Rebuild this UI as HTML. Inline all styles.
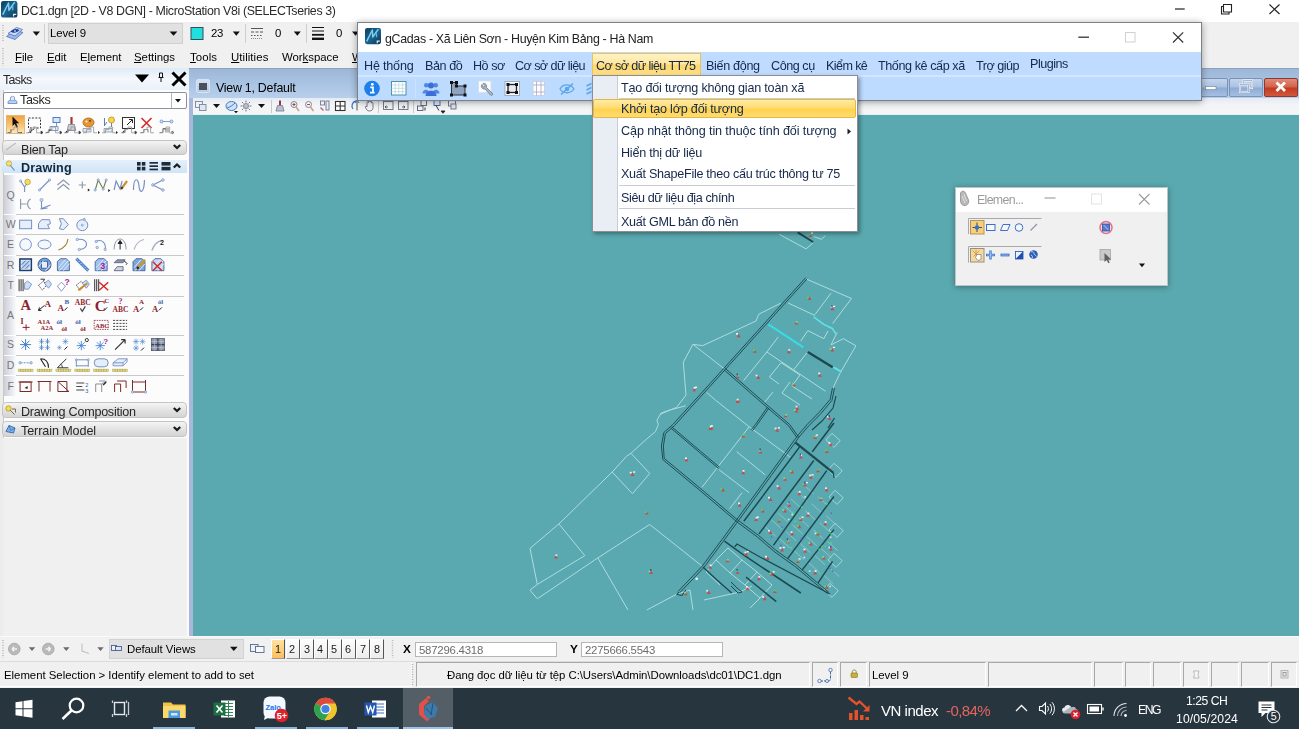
<!DOCTYPE html>
<html><head><meta charset="utf-8"><title>DC1.dgn - MicroStation V8i</title>
<style>
*{box-sizing:border-box;margin:0;padding:0}
html,body{width:1299px;height:729px;overflow:hidden;background:#f0f0f0;font-family:"Liberation Sans",sans-serif;font-size:12px;color:#000}
.a{position:absolute}
.t{position:absolute;white-space:pre;line-height:1;will-change:transform}
svg{position:absolute;overflow:visible}
u{text-decoration:underline;text-underline-offset:1px;text-decoration-thickness:1px}
.cell{position:absolute;top:662px;height:25px;border:1px solid;border-color:#a8a8a8 #fff #fff #a8a8a8;background:#f0f0f0}
.sep{position:absolute;width:1px;background:#c8c8c8}
.bar{position:absolute;left:2px;width:185px;border:1px solid #c4c4c4;border-radius:4px;background:linear-gradient(#f4f4f4,#e2e2e2 55%,#d4d4d4)}
.rowsep{position:absolute;left:16px;width:168px;height:1px;background:#c9c9c9}
.vb{position:absolute;top:639px;width:14px;height:20px;background:linear-gradient(#fdfdfd,#ececec);border-right:1px solid #555;border-bottom:1px solid #999;border-left:1px solid #fff;border-top:1px solid #fff}
</style></head><body>

<!-- main title bar -->
<div class="a" style="left:0;top:0;width:1299px;height:22px;background:#fff"></div>
<!-- chrome toolbar+menu -->
<div class="a" style="left:0;top:22px;width:1299px;height:46px;background:#f0f0f0"></div>
<!-- level dropdown -->
<div class="a" style="left:48px;top:23px;width:135px;height:21px;background:#e1e1e1;border:1px solid #d0d0d0"></div>
<!-- left panel -->
<div class="a" style="left:0;top:68px;width:189px;height:568px;background:#f0f0f0"></div>
<div class="a" style="left:187px;top:90px;width:2px;height:546px;background:#fbfbfb"></div>
<div class="a" style="left:0;top:90px;width:2px;height:546px;background:#fbfbfb"></div>
<!-- view window -->
<div class="a" style="left:189px;top:68px;width:1110px;height:30px;background:linear-gradient(#9db6d5,#a5bfe1 35%,#b7cfea)"></div>
<div class="a" style="left:189px;top:68px;width:1110px;height:1px;background:#8ba2be"></div>
<div class="a" style="left:189px;top:98px;width:4px;height:538px;background:#a9b7da"></div>
<div class="a" style="left:193px;top:97.500px;width:1106px;height:17.500px;background:linear-gradient(#e3ebf5,#f3f4f6 40%,#f5f5f5)"></div>
<div class="a" style="left:193px;top:114px;width:1106px;height:1px;background:#dff3f4"></div>
<div class="a" id="view" style="left:193px;top:115px;width:1106px;height:521px;background:#5aa9b0;overflow:hidden"></div>
<!-- bottom bars -->
<div class="a" style="left:0;top:636px;width:1299px;height:25px;background:#f1f1f1"></div>
<div class="a" style="left:0;top:636px;width:1299px;height:1px;background:#fafafa"></div>
<div class="a" style="left:0;top:661px;width:1299px;height:27px;background:#f0f0f0"></div>
<!-- taskbar -->
<div class="a" style="left:0;top:688px;width:1299px;height:41px;background:#27353e"></div>

<!-- map (inside view, clipped) -->
<div class="a" style="left:193px;top:115px;width:1106px;height:521px;overflow:hidden">
<svg style="left:-193px;top:-115px" width="1299" height="729" viewBox="0 0 1299 729">
<path d="M685.7 405.8L669.9 410.0L661.2 413.0L656.9 420.2L658.3 424.5L655.4 431.7L646.8 438.9L631.0 453.3L626.6 456.2L612.2 472.0L558.9 523.9L530.0 548.4L537.3 584.4L530.0 590.2L537.3 598.8L597.8 557.9L649.7 524.5L701.6 565.7" stroke="#addcdf" stroke-width="1" fill="none" opacity="1"/>
<path d="M631.0 453.3L649.7 473.5L632.4 493.7L612.2 472.0" stroke="#addcdf" stroke-width="1" fill="none" opacity="1"/>
<path d="M558.9 523.9L584.8 555.6L537.3 584.4" stroke="#addcdf" stroke-width="1" fill="none" opacity="1"/>
<path d="M597.8 557.9L628.0 610.0" stroke="#addcdf" stroke-width="1" fill="none" opacity="1"/>
<path d="M646.8 610.0L677.0 594.0L690.0 590.0" stroke="#addcdf" stroke-width="1" fill="none" opacity="1"/>
<path d="M690.0 590.0L693.0 610.0" stroke="#addcdf" stroke-width="1" fill="none" opacity="1"/>
<path d="M704.0 600.0L740.0 592.0L752.0 586.0" stroke="#addcdf" stroke-width="1" fill="none" opacity="1"/>
<path d="M780.7 303.2L758.8 314.2L756.0 321.0L702.5 345.7L692.9 344.3L683.3 362.2L686.0 395.1L676.5 407.4L660.0 414.3" stroke="#addcdf" stroke-width="1" fill="none" opacity="1"/>
<path d="M692.9 344.3L724.5 369.0" stroke="#addcdf" stroke-width="1" fill="none" opacity="1"/>
<path d="M806.0 278.9L851.5 298.5L832.7 323.5" stroke="#addcdf" stroke-width="1" fill="none" opacity="1"/>
<path d="M831.0 293.2L814.9 314.6" stroke="#addcdf" stroke-width="1" fill="none" opacity="1"/>
<path d="M788.2 303.0L814.9 315.5" stroke="#addcdf" stroke-width="1" fill="none" opacity="1"/>
<path d="M837.2 332.4L831.0 344.9L843.4 338.7L855.9 345.8L839.9 373.4L832.7 388.6" stroke="#addcdf" stroke-width="1" fill="none" opacity="1"/>
<path d="M807.8 330.6L823.8 338.7L828.0 331.0" stroke="#addcdf" stroke-width="1" fill="none" opacity="1"/>
<path d="M807.8 330.6L800.6 341.3" stroke="#addcdf" stroke-width="1" fill="none" opacity="1"/>
<path d="M778.3 336.9L766.8 352.0L743.6 380.6" stroke="#addcdf" stroke-width="1" fill="none" opacity="1"/>
<path d="M766.8 352.0L793.5 369.9L825.6 391.3" stroke="#addcdf" stroke-width="1" fill="none" opacity="1"/>
<path d="M793.5 369.9L806.9 352.9" stroke="#addcdf" stroke-width="1" fill="none" opacity="1"/>
<path d="M781.0 362.7L769.4 377.0L779.0 384.0" stroke="#addcdf" stroke-width="1" fill="none" opacity="1"/>
<path d="M781.0 362.7L800.0 375.0" stroke="#addcdf" stroke-width="1" fill="none" opacity="1"/>
<path d="M790.0 382.0L782.0 393.0L800.0 405.0" stroke="#addcdf" stroke-width="1" fill="none" opacity="1"/>
<path d="M800.0 375.0L792.0 386.0L812.0 399.0" stroke="#addcdf" stroke-width="1" fill="none" opacity="1"/>
<path d="M773.0 392.0L764.0 403.0" stroke="#addcdf" stroke-width="1" fill="none" opacity="1"/>
<path d="M779.2 234.3L806.2 248.9L813.1 242.8" stroke="#addcdf" stroke-width="1" fill="none" opacity="1"/>
<path d="M813.8 236.6L821.5 239.3L825.4 235.5" stroke="#addcdf" stroke-width="1" fill="none" opacity="1"/>
<path d="M706.6 392.4L715.3 400.0L749.2 426.8L783.0 451.7L790.0 457.0" stroke="#addcdf" stroke-width="1" fill="none" opacity="1"/>
<path d="M749.2 426.8L701.9 487.4" stroke="#addcdf" stroke-width="1" fill="none" opacity="1"/>
<path d="M736.7 451.7L765.2 474.9" stroke="#addcdf" stroke-width="1" fill="none" opacity="1"/>
<path d="M718.9 469.6L749.2 492.7" stroke="#addcdf" stroke-width="1" fill="none" opacity="1"/>
<path d="M742.0 492.7L729.6 508.8" stroke="#addcdf" stroke-width="1" fill="none" opacity="1"/>
<path d="M716.0 560.0L728.0 548.0L742.0 560.0L730.0 573.0z" stroke="#addcdf" stroke-width="1" fill="none" opacity="1"/>
<path d="M730.0 573.0L745.0 585.0L757.0 572.0L742.0 560.0" stroke="#addcdf" stroke-width="1" fill="none" opacity="1"/>
<path d="M745.0 585.0L760.0 598.0L772.0 585.0L757.0 572.0" stroke="#addcdf" stroke-width="1" fill="none" opacity="1"/>
<path d="M716.0 560.0L706.0 572.0L720.0 585.0" stroke="#addcdf" stroke-width="1" fill="none" opacity="1"/>
<path d="M760.0 598.0L750.0 608.0" stroke="#addcdf" stroke-width="1" fill="none" opacity="1"/>
<path d="M826.0 440.0L832.0 433.3L840.2 440.7L834.1 447.4z" stroke="#addcdf" stroke-width="1" fill="none" opacity="0.85"/>
<path d="M828.0 470.0L834.0 463.3L842.2 470.7L836.1 477.4z" stroke="#addcdf" stroke-width="1" fill="none" opacity="0.85"/>
<path d="M829.0 497.0L835.0 490.3L843.2 497.7L837.1 504.4z" stroke="#addcdf" stroke-width="1" fill="none" opacity="0.85"/>
<path d="M829.0 530.0L835.0 523.3L843.2 530.7L837.1 537.4z" stroke="#addcdf" stroke-width="1" fill="none" opacity="0.85"/>
<path d="M828.0 560.0L834.0 553.3L842.2 560.7L836.1 567.4z" stroke="#addcdf" stroke-width="1" fill="none" opacity="0.85"/>
<path d="M824.0 590.0L830.0 583.3L838.2 590.7L832.1 597.4z" stroke="#addcdf" stroke-width="1" fill="none" opacity="0.85"/>
<path d="M765.4 527.0L775.4 536.0" stroke="#addcdf" stroke-width="1" fill="none" opacity="0.55"/>
<path d="M771.7 519.9L781.7 529.0" stroke="#addcdf" stroke-width="1" fill="none" opacity="0.55"/>
<path d="M778.1 512.9L788.1 522.0" stroke="#addcdf" stroke-width="1" fill="none" opacity="0.55"/>
<path d="M784.5 505.9L794.5 514.9" stroke="#addcdf" stroke-width="1" fill="none" opacity="0.55"/>
<path d="M790.8 498.9L800.8 507.9" stroke="#addcdf" stroke-width="1" fill="none" opacity="0.55"/>
<path d="M797.2 491.8L807.2 500.9" stroke="#addcdf" stroke-width="1" fill="none" opacity="0.55"/>
<path d="M803.6 484.8L813.5 493.8" stroke="#addcdf" stroke-width="1" fill="none" opacity="0.55"/>
<path d="M779.8 538.9L789.8 547.9" stroke="#addcdf" stroke-width="1" fill="none" opacity="0.55"/>
<path d="M786.1 531.8L796.1 540.9" stroke="#addcdf" stroke-width="1" fill="none" opacity="0.55"/>
<path d="M792.5 524.8L802.5 533.9" stroke="#addcdf" stroke-width="1" fill="none" opacity="0.55"/>
<path d="M798.9 517.8L808.9 526.8" stroke="#addcdf" stroke-width="1" fill="none" opacity="0.55"/>
<path d="M805.2 510.8L815.2 519.8" stroke="#addcdf" stroke-width="1" fill="none" opacity="0.55"/>
<path d="M811.6 503.7L821.6 512.8" stroke="#addcdf" stroke-width="1" fill="none" opacity="0.55"/>
<path d="M818.0 496.7L827.9 505.7" stroke="#addcdf" stroke-width="1" fill="none" opacity="0.55"/>
<path d="M794.2 550.8L804.2 559.8" stroke="#addcdf" stroke-width="1" fill="none" opacity="0.55"/>
<path d="M800.5 543.7L810.5 552.8" stroke="#addcdf" stroke-width="1" fill="none" opacity="0.55"/>
<path d="M806.9 536.7L816.9 545.8" stroke="#addcdf" stroke-width="1" fill="none" opacity="0.55"/>
<path d="M813.3 529.7L823.2 538.7" stroke="#addcdf" stroke-width="1" fill="none" opacity="0.55"/>
<path d="M819.6 522.6L829.6 531.7" stroke="#addcdf" stroke-width="1" fill="none" opacity="0.55"/>
<path d="M826.0 515.6L836.0 524.7" stroke="#addcdf" stroke-width="1" fill="none" opacity="0.55"/>
<path d="M808.6 562.7L818.6 571.7" stroke="#addcdf" stroke-width="1" fill="none" opacity="0.55"/>
<path d="M814.9 555.6L824.9 564.7" stroke="#addcdf" stroke-width="1" fill="none" opacity="0.55"/>
<path d="M821.3 548.6L831.3 557.7" stroke="#addcdf" stroke-width="1" fill="none" opacity="0.55"/>
<path d="M827.7 541.6L837.7 550.6" stroke="#addcdf" stroke-width="1" fill="none" opacity="0.55"/>
<path d="M823.0 574.6L833.0 583.6" stroke="#addcdf" stroke-width="1" fill="none" opacity="0.55"/>
<path d="M829.3 567.5L839.3 576.6" stroke="#addcdf" stroke-width="1" fill="none" opacity="0.55"/>
<path d="M768.4 324.3L803.4 347.4" stroke="#38dbe6" stroke-width="2.2" fill="none" opacity="1"/>
<path d="M833.4 367.2L841.5 371.8" stroke="#5fe0e8" stroke-width="2" fill="none" opacity="1"/>
<path d="M813.6 316.9L824.0 324.5L832.3 328.5L836.0 334.0" stroke="#5fe0e8" stroke-width="1.6" fill="none" opacity="1"/>
<path d="M805.7 277.6L723.8 368.4L673.0 424.3L663.8 432.6L661.4 446.0L662.8 459.6L699.4 490.0L736.8 521.7" stroke="#1d4850" stroke-width="0.95" fill="none" opacity="1"/>
<path d="M807.1 278.8L725.2 369.6L674.4 425.7L665.4 433.6L663.4 446.0L664.2 458.4L700.6 488.6L738.0 520.3" stroke="#1d4850" stroke-width="0.95" fill="none" opacity="1"/>
<path d="M670.8 428.0L699.5 452.4L718.3 468.3" stroke="#1d4850" stroke-width="0.95" fill="none" opacity="1"/>
<path d="M671.8 426.8L700.5 451.2L719.3 467.1" stroke="#1d4850" stroke-width="0.95" fill="none" opacity="1"/>
<path d="M723.9 369.7L767.8 408.1L788.4 425.6L797.2 437.9" stroke="#1d4850" stroke-width="0.95" fill="none" opacity="1"/>
<path d="M725.1 368.3L769.0 406.7L789.6 424.4L798.6 436.9" stroke="#1d4850" stroke-width="0.95" fill="none" opacity="1"/>
<path d="M767.7 406.9L755.4 424.5L751.2 429.7" stroke="#1d4850" stroke-width="0.95" fill="none" opacity="1"/>
<path d="M769.1 407.9L756.6 425.5L752.4 430.7" stroke="#1d4850" stroke-width="0.95" fill="none" opacity="1"/>
<path d="M832.5 387.8L830.1 399.5L819.2 412.3L807.3 424.3L798.2 434.9L734.7 522.4L702.1 566.3L678.2 591.3" stroke="#1d4850" stroke-width="0.95" fill="none" opacity="1"/>
<path d="M834.5 388.2L831.9 400.5L820.8 413.7L808.9 425.7L799.8 436.1L736.3 523.6L703.7 567.7L679.8 592.7" stroke="#1d4850" stroke-width="0.95" fill="none" opacity="1"/>
<path d="M836.0 396.0L833.0 408.0L822.0 421.0L812.0 430.0" stroke="#1d4850" stroke-width="1.1" fill="none" opacity="1"/>
<path d="M834.5 418.0L828.0 428.0" stroke="#1d4850" stroke-width="1.3" fill="none" opacity="1"/>
<path d="M679.0 592.0L677.0 594.5L682.0 595.5L686.0 590.0" stroke="#1d4850" stroke-width="1.1" fill="none" opacity="1"/>
<path d="M736.8 521.8L757.0 536.7L774.3 551.6L794.4 566.0L827.6 593.7" stroke="#1d4850" stroke-width="0.95" fill="none" opacity="1"/>
<path d="M738.0 520.2L758.2 535.1L775.5 550.0L795.6 564.4L828.8 592.3" stroke="#1d4850" stroke-width="0.95" fill="none" opacity="1"/>
<path d="M759.0 533.9L813.8 460.5" stroke="#1d4850" stroke-width="1.5" fill="none" opacity="1"/>
<path d="M773.4 545.4L826.7 470.6" stroke="#1d4850" stroke-width="1.5" fill="none" opacity="1"/>
<path d="M787.8 558.4L833.9 496.5" stroke="#1d4850" stroke-width="1.5" fill="none" opacity="1"/>
<path d="M802.2 569.9L833.9 529.6" stroke="#1d4850" stroke-width="1.5" fill="none" opacity="1"/>
<path d="M818.1 582.9L832.5 561.3" stroke="#1d4850" stroke-width="1.5" fill="none" opacity="1"/>
<path d="M812.3 451.8L833.9 423.0" stroke="#1d4850" stroke-width="1.5" fill="none" opacity="1"/>
<path d="M743.8 521.3L800.0 446.4" stroke="#1d4850" stroke-width="1.5" fill="none" opacity="1"/>
<path d="M795.5 442.6L833.4 472.8" stroke="#1d4850" stroke-width="2.2" fill="none" opacity="1"/>
<path d="M833.4 472.8L834.0 478.0" stroke="#1d4850" stroke-width="1.2" fill="none" opacity="1"/>
<path d="M807.8 352.0L832.7 367.2" stroke="#1d4850" stroke-width="2.4" fill="none" opacity="1"/>
<path d="M797.7 232.4L813.1 242.0" stroke="#1d4850" stroke-width="2" fill="none" opacity="1"/>
<path d="M724.5 541.1L745.0 556.0L800.8 593.0" stroke="#1d4850" stroke-width="1.5" fill="none" opacity="1"/>
<path d="M734.6 546.9L737.0 544.0L760.0 557.0L830.0 594.0" stroke="#1d4850" stroke-width="1.3" fill="none" opacity="1"/>
<path d="M746.1 577.1L776.3 601.6" stroke="#1d4850" stroke-width="1.4" fill="none" opacity="1"/>
<path d="M702.9 567.0L717.0 580.0L731.7 593.0" stroke="#1d4850" stroke-width="1.3" fill="none" opacity="1"/>
<path d="M731.0 582.0L737.0 588.0L742.0 592.0L738.0 593.0L731.0 586.0" stroke="#1d4850" stroke-width="1" fill="none" opacity="1"/>
<path d="M630.5 476.0l1.900-3.500 1.900 3.500z" fill="#cf4340" opacity=".92"/>
<rect x="629.8" y="471.8" width="1.900" height="1.700" fill="#f4f4f4"/>
<rect x="633.0" y="471.4" width="2.200" height="1.300" fill="#f6f6f6"/>
<path d="M644.9 514.6l1.900-3.500 1.900 3.500z" fill="#cf4340" opacity=".92"/>
<rect x="645.2" y="511.2" width="1.900" height="1.700" fill="#52d85a"/>
<path d="M554.1 558.6l1.900-3.500 1.900 3.500z" fill="#cf4340" opacity=".92"/>
<rect x="555.4" y="554.4" width="1.900" height="1.700" fill="#e9e9ff"/>
<path d="M649.2 573.9l1.900-3.500 1.900 3.500z" fill="#cf4340" opacity=".92"/>
<rect x="648.5" y="570.5" width="1.900" height="1.700" fill="#7ce07a"/>
<rect x="650.1" y="569.0" width="1.300" height="1.900" fill="#3b3fae"/>
<path d="M684.7 461.6l1.900-3.500 1.900 3.500z" fill="#cf4340" opacity=".92"/>
<rect x="685.0" y="457.4" width="1.900" height="1.700" fill="#f4f4f4"/>
<path d="M708.3 429.8l1.900-3.500 1.900 3.500z" fill="#cf4340" opacity=".92"/>
<rect x="709.6" y="426.4" width="1.900" height="1.700" fill="#52d85a"/>
<rect x="710.8" y="425.2" width="2.200" height="1.300" fill="#f6f6f6"/>
<path d="M706.9 594.1l1.900-3.500 1.900 3.500z" fill="#cf4340" opacity=".92"/>
<rect x="706.2" y="589.9" width="1.900" height="1.700" fill="#e9e9ff"/>
<path d="M683.8 595.3l1.900-3.500 1.900 3.500z" fill="#cf4340" opacity=".92"/>
<rect x="684.1" y="591.9" width="1.900" height="1.700" fill="#7ce07a"/>
<path d="M708.3 568.7l1.900-3.500 1.900 3.500z" fill="#cf4340" opacity=".92"/>
<rect x="709.6" y="564.5" width="1.900" height="1.700" fill="#f4f4f4"/>
<path d="M807.6 300.1l1.900-3.500 1.900 3.500z" fill="#cf4340" opacity=".92"/>
<rect x="806.9" y="296.7" width="1.900" height="1.700" fill="#52d85a"/>
<path d="M830.4 310.3l1.900-3.500 1.900 3.500z" fill="#cf4340" opacity=".92"/>
<rect x="830.7" y="306.1" width="1.900" height="1.700" fill="#e9e9ff"/>
<rect x="832.9" y="305.7" width="2.200" height="1.300" fill="#f6f6f6"/>
<rect x="831.3" y="305.4" width="1.300" height="1.900" fill="#3b3fae"/>
<path d="M794.5 324.5l1.900-3.500 1.900 3.500z" fill="#cf4340" opacity=".92"/>
<rect x="795.8" y="321.1" width="1.900" height="1.700" fill="#7ce07a"/>
<path d="M736.8 337.2l1.900-3.500 1.900 3.500z" fill="#cf4340" opacity=".92"/>
<rect x="736.1" y="333.0" width="1.900" height="1.700" fill="#f4f4f4"/>
<path d="M752.8 352.8l1.900-3.500 1.900 3.500z" fill="#cf4340" opacity=".92"/>
<rect x="753.1" y="349.4" width="1.900" height="1.700" fill="#52d85a"/>
<path d="M787.0 353.3l1.900-3.500 1.900 3.500z" fill="#cf4340" opacity=".92"/>
<rect x="788.3" y="349.1" width="1.900" height="1.700" fill="#e9e9ff"/>
<path d="M830.4 351.4l1.900-3.500 1.900 3.500z" fill="#cf4340" opacity=".92"/>
<rect x="829.7" y="348.0" width="1.900" height="1.700" fill="#7ce07a"/>
<rect x="832.9" y="346.8" width="2.200" height="1.300" fill="#f6f6f6"/>
<path d="M818.0 376.7l1.900-3.500 1.900 3.500z" fill="#cf4340" opacity=".92"/>
<rect x="818.3" y="372.5" width="1.900" height="1.700" fill="#f4f4f4"/>
<path d="M735.7 378.3l1.900-3.500 1.900 3.500z" fill="#cf4340" opacity=".92"/>
<rect x="737.0" y="374.9" width="1.900" height="1.700" fill="#52d85a"/>
<rect x="736.6" y="373.4" width="1.300" height="1.900" fill="#3b3fae"/>
<path d="M756.3 378.9l1.900-3.500 1.900 3.500z" fill="#cf4340" opacity=".92"/>
<rect x="755.6" y="374.7" width="1.900" height="1.700" fill="#e9e9ff"/>
<path d="M792.0 386.3l1.900-3.500 1.900 3.500z" fill="#cf4340" opacity=".92"/>
<rect x="792.3" y="382.9" width="1.900" height="1.700" fill="#7ce07a"/>
<path d="M692.4 391.2l1.900-3.500 1.900 3.500z" fill="#cf4340" opacity=".92"/>
<rect x="693.7" y="387.0" width="1.900" height="1.700" fill="#f4f4f4"/>
<rect x="694.9" y="386.6" width="2.200" height="1.300" fill="#f6f6f6"/>
<path d="M736.3 402.2l1.900-3.500 1.900 3.500z" fill="#cf4340" opacity=".92"/>
<rect x="735.6" y="398.8" width="1.900" height="1.700" fill="#52d85a"/>
<path d="M795.3 409.9l1.900-3.500 1.900 3.500z" fill="#cf4340" opacity=".92"/>
<rect x="795.6" y="405.7" width="1.900" height="1.700" fill="#e9e9ff"/>
<path d="M783.8 417.3l1.900-3.500 1.900 3.500z" fill="#cf4340" opacity=".92"/>
<rect x="785.1" y="413.9" width="1.900" height="1.700" fill="#7ce07a"/>
<path d="M827.6 420.0l1.900-3.500 1.900 3.500z" fill="#cf4340" opacity=".92"/>
<rect x="826.9" y="415.8" width="1.900" height="1.700" fill="#f4f4f4"/>
<rect x="828.5" y="415.1" width="1.300" height="1.900" fill="#3b3fae"/>
<path d="M808.4 237.0l1.900-3.500 1.900 3.500z" fill="#cf4340" opacity=".92"/>
<rect x="808.7" y="233.6" width="1.900" height="1.700" fill="#52d85a"/>
<rect x="810.9" y="232.4" width="2.200" height="1.300" fill="#f6f6f6"/>
<path d="M735.5 403.0l1.900-3.500 1.900 3.500z" fill="#cf4340" opacity=".92"/>
<rect x="736.8" y="398.8" width="1.900" height="1.700" fill="#e9e9ff"/>
<path d="M794.6 412.5l1.900-3.500 1.900 3.500z" fill="#cf4340" opacity=".92"/>
<rect x="793.9" y="409.1" width="1.900" height="1.700" fill="#7ce07a"/>
<path d="M709.6 429.8l1.900-3.500 1.900 3.500z" fill="#cf4340" opacity=".92"/>
<rect x="709.9" y="425.6" width="1.900" height="1.700" fill="#f4f4f4"/>
<path d="M741.3 437.6l1.900-3.500 1.900 3.500z" fill="#cf4340" opacity=".92"/>
<rect x="742.6" y="434.2" width="1.900" height="1.700" fill="#52d85a"/>
<path d="M775.3 431.8l1.900-3.500 1.900 3.500z" fill="#cf4340" opacity=".92"/>
<rect x="774.6" y="427.6" width="1.900" height="1.700" fill="#e9e9ff"/>
<rect x="777.8" y="427.2" width="2.200" height="1.300" fill="#f6f6f6"/>
<path d="M758.6 453.4l1.900-3.500 1.900 3.500z" fill="#cf4340" opacity=".92"/>
<rect x="758.9" y="450.0" width="1.900" height="1.700" fill="#7ce07a"/>
<rect x="759.5" y="448.5" width="1.300" height="1.900" fill="#3b3fae"/>
<path d="M741.3 474.2l1.900-3.500 1.900 3.500z" fill="#cf4340" opacity=".92"/>
<rect x="742.6" y="470.0" width="1.900" height="1.700" fill="#f4f4f4"/>
<path d="M721.1 491.5l1.900-3.500 1.900 3.500z" fill="#cf4340" opacity=".92"/>
<rect x="720.4" y="488.1" width="1.900" height="1.700" fill="#52d85a"/>
<path d="M737.8 506.7l1.900-3.500 1.900 3.500z" fill="#cf4340" opacity=".92"/>
<rect x="738.1" y="502.5" width="1.900" height="1.700" fill="#e9e9ff"/>
<path d="M813.3 439.0l1.900-3.500 1.900 3.500z" fill="#cf4340" opacity=".92"/>
<rect x="814.6" y="435.6" width="1.900" height="1.700" fill="#7ce07a"/>
<rect x="815.8" y="434.4" width="2.200" height="1.300" fill="#f6f6f6"/>
<path d="M829.1 446.2l1.900-3.500 1.900 3.500z" fill="#cf4340" opacity=".92"/>
<rect x="828.4" y="442.0" width="1.900" height="1.700" fill="#f4f4f4"/>
<path d="M824.8 452.9l1.900-3.500 1.900 3.500z" fill="#cf4340" opacity=".92"/>
<rect x="825.1" y="449.5" width="1.900" height="1.700" fill="#52d85a"/>
<path d="M798.9 458.6l1.900-3.500 1.900 3.500z" fill="#cf4340" opacity=".92"/>
<rect x="800.2" y="454.4" width="1.900" height="1.700" fill="#e9e9ff"/>
<rect x="799.8" y="453.7" width="1.300" height="1.900" fill="#3b3fae"/>
<path d="M790.3 473.6l1.900-3.500 1.900 3.500z" fill="#cf4340" opacity=".92"/>
<rect x="789.6" y="470.2" width="1.900" height="1.700" fill="#7ce07a"/>
<path d="M809.0 478.8l1.900-3.500 1.900 3.500z" fill="#cf4340" opacity=".92"/>
<rect x="809.3" y="474.6" width="1.900" height="1.700" fill="#f4f4f4"/>
<rect x="811.5" y="474.2" width="2.200" height="1.300" fill="#f6f6f6"/>
<path d="M816.2 472.2l1.900-3.500 1.900 3.500z" fill="#cf4340" opacity=".92"/>
<rect x="817.5" y="468.8" width="1.900" height="1.700" fill="#52d85a"/>
<path d="M777.3 489.4l1.900-3.500 1.900 3.500z" fill="#cf4340" opacity=".92"/>
<rect x="776.6" y="485.2" width="1.900" height="1.700" fill="#e9e9ff"/>
<path d="M783.1 480.8l1.900-3.500 1.900 3.500z" fill="#cf4340" opacity=".92"/>
<rect x="783.4" y="477.4" width="1.900" height="1.700" fill="#7ce07a"/>
<path d="M797.5 495.2l1.900-3.500 1.900 3.500z" fill="#cf4340" opacity=".92"/>
<rect x="798.8" y="491.0" width="1.900" height="1.700" fill="#f4f4f4"/>
<path d="M803.2 486.6l1.900-3.500 1.900 3.500z" fill="#cf4340" opacity=".92"/>
<rect x="802.5" y="483.2" width="1.900" height="1.700" fill="#52d85a"/>
<rect x="805.7" y="482.0" width="2.200" height="1.300" fill="#f6f6f6"/>
<rect x="804.1" y="481.7" width="1.300" height="1.900" fill="#3b3fae"/>
<path d="M824.8 491.5l1.900-3.500 1.900 3.500z" fill="#cf4340" opacity=".92"/>
<rect x="825.1" y="487.3" width="1.900" height="1.700" fill="#e9e9ff"/>
<path d="M819.1 501.0l1.900-3.500 1.900 3.500z" fill="#cf4340" opacity=".92"/>
<rect x="820.4" y="497.6" width="1.900" height="1.700" fill="#7ce07a"/>
<path d="M768.7 501.0l1.900-3.500 1.900 3.500z" fill="#cf4340" opacity=".92"/>
<rect x="768.0" y="496.8" width="1.900" height="1.700" fill="#f4f4f4"/>
<path d="M760.9 512.5l1.900-3.500 1.900 3.500z" fill="#cf4340" opacity=".92"/>
<rect x="761.2" y="509.1" width="1.900" height="1.700" fill="#52d85a"/>
<path d="M754.3 521.1l1.900-3.500 1.900 3.500z" fill="#cf4340" opacity=".92"/>
<rect x="755.6" y="516.9" width="1.900" height="1.700" fill="#e9e9ff"/>
<rect x="756.8" y="516.5" width="2.200" height="1.300" fill="#f6f6f6"/>
<path d="M783.1 512.5l1.900-3.500 1.900 3.500z" fill="#cf4340" opacity=".92"/>
<rect x="782.4" y="509.1" width="1.900" height="1.700" fill="#7ce07a"/>
<path d="M787.4 506.7l1.900-3.500 1.900 3.500z" fill="#cf4340" opacity=".92"/>
<rect x="787.7" y="502.5" width="1.900" height="1.700" fill="#f4f4f4"/>
<rect x="788.3" y="501.8" width="1.300" height="1.900" fill="#3b3fae"/>
<path d="M777.3 522.6l1.900-3.500 1.900 3.500z" fill="#cf4340" opacity=".92"/>
<rect x="778.6" y="519.2" width="1.900" height="1.700" fill="#52d85a"/>
<path d="M768.7 534.1l1.900-3.500 1.900 3.500z" fill="#cf4340" opacity=".92"/>
<rect x="768.0" y="529.9" width="1.900" height="1.700" fill="#e9e9ff"/>
<path d="M798.9 521.1l1.900-3.500 1.900 3.500z" fill="#cf4340" opacity=".92"/>
<rect x="799.2" y="517.7" width="1.900" height="1.700" fill="#7ce07a"/>
<rect x="801.4" y="516.5" width="2.200" height="1.300" fill="#f6f6f6"/>
<path d="M806.1 516.8l1.900-3.500 1.900 3.500z" fill="#cf4340" opacity=".92"/>
<rect x="807.4" y="512.6" width="1.900" height="1.700" fill="#f4f4f4"/>
<path d="M797.5 528.3l1.900-3.500 1.900 3.500z" fill="#cf4340" opacity=".92"/>
<rect x="796.8" y="524.9" width="1.900" height="1.700" fill="#52d85a"/>
<path d="M790.3 535.5l1.900-3.500 1.900 3.500z" fill="#cf4340" opacity=".92"/>
<rect x="790.6" y="531.3" width="1.900" height="1.700" fill="#e9e9ff"/>
<path d="M785.9 543.3l1.900-3.500 1.900 3.500z" fill="#cf4340" opacity=".92"/>
<rect x="787.2" y="539.9" width="1.900" height="1.700" fill="#7ce07a"/>
<rect x="786.8" y="538.4" width="1.300" height="1.900" fill="#3b3fae"/>
<path d="M780.2 551.4l1.900-3.500 1.900 3.500z" fill="#cf4340" opacity=".92"/>
<rect x="779.5" y="547.2" width="1.900" height="1.700" fill="#f4f4f4"/>
<rect x="782.7" y="546.8" width="2.200" height="1.300" fill="#f6f6f6"/>
<path d="M816.2 535.5l1.900-3.500 1.900 3.500z" fill="#cf4340" opacity=".92"/>
<rect x="816.5" y="532.1" width="1.900" height="1.700" fill="#52d85a"/>
<path d="M823.4 525.4l1.900-3.500 1.900 3.500z" fill="#cf4340" opacity=".92"/>
<rect x="824.7" y="521.2" width="1.900" height="1.700" fill="#e9e9ff"/>
<path d="M809.0 545.6l1.900-3.500 1.900 3.500z" fill="#cf4340" opacity=".92"/>
<rect x="808.3" y="542.2" width="1.900" height="1.700" fill="#7ce07a"/>
<path d="M803.2 552.8l1.900-3.500 1.900 3.500z" fill="#cf4340" opacity=".92"/>
<rect x="803.5" y="548.6" width="1.900" height="1.700" fill="#f4f4f4"/>
<path d="M796.0 562.9l1.900-3.500 1.900 3.500z" fill="#cf4340" opacity=".92"/>
<rect x="797.3" y="559.5" width="1.900" height="1.700" fill="#52d85a"/>
<rect x="798.5" y="558.3" width="2.200" height="1.300" fill="#f6f6f6"/>
<path d="M829.1 550.8l1.900-3.500 1.900 3.500z" fill="#cf4340" opacity=".92"/>
<rect x="828.4" y="546.6" width="1.900" height="1.700" fill="#e9e9ff"/>
<rect x="830.0" y="545.9" width="1.300" height="1.900" fill="#3b3fae"/>
<path d="M821.9 559.4l1.900-3.500 1.900 3.500z" fill="#cf4340" opacity=".92"/>
<rect x="822.2" y="556.0" width="1.900" height="1.700" fill="#7ce07a"/>
<path d="M813.3 574.4l1.900-3.500 1.900 3.500z" fill="#cf4340" opacity=".92"/>
<rect x="814.6" y="570.2" width="1.900" height="1.700" fill="#f4f4f4"/>
<path d="M824.8 588.8l1.900-3.500 1.900 3.500z" fill="#cf4340" opacity=".92"/>
<rect x="824.1" y="585.4" width="1.900" height="1.700" fill="#52d85a"/>
<path d="M744.2 555.7l1.900-3.500 1.900 3.500z" fill="#cf4340" opacity=".92"/>
<rect x="744.5" y="551.5" width="1.900" height="1.700" fill="#e9e9ff"/>
<rect x="746.7" y="551.1" width="2.200" height="1.300" fill="#f6f6f6"/>
<path d="M725.5 562.3l1.900-3.500 1.900 3.500z" fill="#cf4340" opacity=".92"/>
<rect x="726.8" y="558.9" width="1.900" height="1.700" fill="#7ce07a"/>
<path d="M765.8 560.0l1.900-3.500 1.900 3.500z" fill="#cf4340" opacity=".92"/>
<rect x="765.1" y="555.8" width="1.900" height="1.700" fill="#f4f4f4"/>
<path d="M735.5 573.8l1.900-3.500 1.900 3.500z" fill="#cf4340" opacity=".92"/>
<rect x="735.8" y="570.4" width="1.900" height="1.700" fill="#52d85a"/>
<rect x="736.4" y="568.9" width="1.300" height="1.900" fill="#3b3fae"/>
<path d="M757.1 580.2l1.900-3.500 1.900 3.500z" fill="#cf4340" opacity=".92"/>
<rect x="758.4" y="576.0" width="1.900" height="1.700" fill="#e9e9ff"/>
<path d="M770.1 575.8l1.900-3.500 1.900 3.500z" fill="#cf4340" opacity=".92"/>
<rect x="769.4" y="572.4" width="1.900" height="1.700" fill="#7ce07a"/>
<rect x="772.6" y="571.2" width="2.200" height="1.300" fill="#f6f6f6"/>
<path d="M745.6 590.2l1.900-3.500 1.900 3.500z" fill="#cf4340" opacity=".92"/>
<rect x="745.9" y="586.0" width="1.900" height="1.700" fill="#f4f4f4"/>
<path d="M773.0 593.1l1.900-3.500 1.900 3.500z" fill="#cf4340" opacity=".92"/>
<rect x="774.3" y="589.7" width="1.900" height="1.700" fill="#52d85a"/>
<path d="M762.9 600.3l1.900-3.500 1.900 3.500z" fill="#cf4340" opacity=".92"/>
<rect x="762.2" y="596.1" width="1.900" height="1.700" fill="#e9e9ff"/>
<rect x="790.4" y="547.1" width="1.600" height="1.600" fill="#58e060" opacity=".85"/>
<rect x="791.4" y="513.8" width="1.600" height="1.600" fill="#e8f6f6" opacity=".85"/>
<rect x="780.2" y="544.4" width="1.600" height="1.600" fill="#6a5fd0" opacity=".85"/>
<rect x="770.8" y="536.2" width="1.600" height="1.600" fill="#6a5fd0" opacity=".85"/>
<rect x="791.8" y="511.6" width="1.600" height="1.600" fill="#58e060" opacity=".85"/>
<rect x="830.5" y="542.0" width="1.600" height="1.600" fill="#58e060" opacity=".85"/>
<rect x="818.4" y="548.5" width="1.600" height="1.600" fill="#58e060" opacity=".85"/>
<rect x="804.4" y="496.1" width="1.600" height="1.600" fill="#e8f6f6" opacity=".85"/>
<rect x="814.5" y="532.6" width="1.600" height="1.600" fill="#e8f6f6" opacity=".85"/>
<rect x="830.4" y="533.1" width="1.600" height="1.600" fill="#58e060" opacity=".85"/>
<rect x="829.8" y="536.5" width="1.600" height="1.600" fill="#e8f6f6" opacity=".85"/>
<rect x="801.1" y="506.3" width="1.600" height="1.600" fill="#58e060" opacity=".85"/>
<rect x="825.8" y="545.8" width="1.600" height="1.600" fill="#6a5fd0" opacity=".85"/>
<rect x="786.7" y="541.5" width="1.600" height="1.600" fill="#58e060" opacity=".85"/>
<rect x="781.2" y="526.3" width="1.600" height="1.600" fill="#6a5fd0" opacity=".85"/>
<rect x="826.0" y="503.1" width="1.600" height="1.600" fill="#58e060" opacity=".85"/>
<rect x="803.5" y="556.7" width="1.600" height="1.600" fill="#e8f6f6" opacity=".85"/>
<rect x="794.5" y="520.6" width="1.600" height="1.600" fill="#58e060" opacity=".85"/>
<rect x="829.3" y="585.7" width="1.600" height="1.600" fill="#e8f6f6" opacity=".85"/>
<rect x="800.6" y="537.9" width="1.600" height="1.600" fill="#6a5fd0" opacity=".85"/>
<rect x="821.3" y="545.7" width="1.600" height="1.600" fill="#58e060" opacity=".85"/>
<rect x="808.8" y="570.3" width="1.600" height="1.600" fill="#e8f6f6" opacity=".85"/>
<rect x="829.5" y="567.6" width="1.600" height="1.600" fill="#6a5fd0" opacity=".85"/>
<rect x="825.1" y="545.5" width="1.600" height="1.600" fill="#58e060" opacity=".85"/>
<rect x="818.8" y="572.5" width="1.600" height="1.600" fill="#58e060" opacity=".85"/>
<rect x="830.4" y="512.4" width="1.600" height="1.600" fill="#6a5fd0" opacity=".85"/>
<rect x="787.9" y="518.7" width="1.600" height="1.600" fill="#e8f6f6" opacity=".85"/>
<rect x="832.0" y="570.2" width="1.600" height="1.600" fill="#6a5fd0" opacity=".85"/>
<circle cx="696.700" cy="578.700" r="1.300" fill="#e8ffff"/>
</svg>
</div>

<!-- main app icon -->
<svg style="left:1.400px;top:1.100px" width="16.400" height="16.600" viewBox="0 0 16.400 16.600">
<defs><linearGradient id="gi1" x1="0" y1="0" x2="1" y2="1"><stop offset="0" stop-color="#0d3f5f"/><stop offset=".5" stop-color="#1b6591"/><stop offset="1" stop-color="#0c3350"/></linearGradient></defs>
 <rect x="0" y="0" width="16.400" height="16.600" rx="2.200" fill="url(#gi1)"/>
 <path d="M1.700 13.700L7.500 2l.4 7.200L13.700 1.100" stroke="#86d3f6" stroke-width="1.500" fill="none" stroke-linejoin="round" opacity=".95"/>
 <path d="M11.600 5.100l.3 4.300" stroke="#5fb6e6" stroke-width="1.300"/>
 <path d="M12.600 15.600v-2.200h2.600" stroke="#d9ecf7" stroke-width="1.300" fill="none"/>
</svg>
<!-- main window buttons -->
<svg style="left:1160px;top:0" width="139" height="22" viewBox="1160 0 139 22">
 <path d="M1175 9h9.700" stroke="#222" stroke-width="1.200"/>
 <path d="M1223.500 6.500h-2v7.500h7.500v-2M1223.500 4.500h8v7.500h-8z" stroke="#222" stroke-width="1.100" fill="none"/>
 <path d="M1269.500 4.500l10 9.500M1279.500 4.500l-10 9.500" stroke="#222" stroke-width="1.200"/>
</svg>
<!-- top toolbar -->
<svg style="left:0;top:22px" width="360" height="24" viewBox="0 22 360 24">
 <path d="M3 25v17" stroke="#b8b8b8" stroke-width="1.500" stroke-dasharray="1 1.500"/>
 <path d="M6.500 36.500l9-6.500 7.500 2.500-8 7z" fill="#9db9ea" stroke="#4a6fc0" stroke-width=".8"/>
 <path d="M8 33.500l8.500-6 6 2-7.500 6.500z" fill="#c9dbf6" stroke="#4a6fc0" stroke-width=".8"/>
 <path d="M10.500 31.800c2.500-3 6.500-3.600 9-1.500-2.500 2.600-6 3.300-9 1.500z" fill="#24408c"/>
 <circle cx="15" cy="31" r="1.100" fill="#9db9ea"/>
 <path d="M32.700 31.500h7.300l-3.650 4.200z" fill="#111"/>
 <path d="M44.500 24v19" stroke="#cfcfcf" stroke-width="1"/>
 <path d="M169.600 31.500h7.800l-3.900 4.200z" fill="#111"/>
 <rect x="191" y="27.500" width="12" height="12" fill="#1fe0df" stroke="#3a4a55" stroke-width="1"/>
 <path d="M232.800 31.500h7l-3.500 4.200z" fill="#111"/>
 <path d="M245.500 24v19" stroke="#cfcfcf" stroke-width="1"/>
 <path d="M251 28.500h12" stroke="#555" stroke-width="1"/>
 <path d="M251 32h12" stroke="#555" stroke-width="1" stroke-dasharray="3 1.500"/>
 <path d="M251 35.500h12" stroke="#555" stroke-width="1" stroke-dasharray="1.500 1.500"/>
 <path d="M251 38.500h12" stroke="#888" stroke-width="1" stroke-dasharray="1 1"/>
 <path d="M293.800 31.500h7l-3.500 4.200z" fill="#111"/>
 <path d="M306.500 24v19" stroke="#cfcfcf" stroke-width="1"/>
 <path d="M312 27.500h12M312 31h12" stroke="#111" stroke-width="1.200"/>
 <path d="M312 34.800h12" stroke="#111" stroke-width="1.800"/>
 <path d="M312 38.800h12" stroke="#111" stroke-width="2.400"/>
 <path d="M352 31.500h7l-3.500 4.200z" fill="#111"/>
</svg>
<span class="t" style="left:352px;top:52.400px;font-size:11.400px"><u>W</u>indow</span>
<svg style="left:2px;top:48px" width="3" height="18" viewBox="0 0 3 18"><path d="M1 0v18" stroke="#b8b8b8" stroke-width="1.500" stroke-dasharray="1 1.500"/></svg>
<!-- view title icon -->
<div class="a" style="left:196px;top:79px;width:14px;height:14px;border:1px solid #d7e3f2;border-radius:2px;background:linear-gradient(#d3e0f0,#b7cbe6)"></div>
<div class="a" style="left:199px;top:82.500px;width:7.500px;height:7.500px;background:#4a4f5c"></div>
<!-- view buttons -->
<div class="a" style="left:1199px;top:77.500px;width:28.500px;height:19px;border:1px solid #7b92b5;border-radius:2px;background:linear-gradient(#c3d5ec,#a9c1e2 48%,#8eabd4 52%,#a5bfe1)"></div>
<div class="a" style="left:1229px;top:77.500px;width:33.500px;height:19px;border:1px solid #7b92b5;border-radius:2px;background:linear-gradient(#c3d5ec,#a9c1e2 48%,#8eabd4 52%,#a5bfe1)"></div>
<div class="a" style="left:1264px;top:77.500px;width:33.500px;height:19px;border:1px solid #8a3b30;border-radius:2px;background:linear-gradient(#e08a76,#d2614a 48%,#c2391f 52%,#d2573d)"></div>
<svg style="left:1199px;top:77px" width="100" height="20" viewBox="1199 77 100 20">
 <rect x="1205.500" y="86.500" width="10.500" height="3.200" fill="#fff" stroke="#6c7f9d" stroke-width=".6"/>
 <path d="M1243.500 83.500v-3h8.500v7.500h-3" fill="none" stroke="#fff" stroke-width="1.800"/>
 <rect x="1240" y="84.500" width="8.500" height="7.500" fill="none" stroke="#fff" stroke-width="1.800"/>
 <path d="M1243.500 83.500v-3h8.500v7.500h-3M1240 84.500h8.500v7.500h-8.500z" fill="none" stroke="#5b6f90" stroke-width=".5"/>
 <path d="M1276.500 82.500l8.500 8.500M1285 82.500l-8.500 8.500" stroke="#fff" stroke-width="2.800"/>
</svg>
<!-- view toolbar icons -->
<svg style="left:193px;top:98px" width="270" height="17" viewBox="193 98 270 17">
 <rect x="195.500" y="101.500" width="7" height="6" fill="#eef2f8" stroke="#7a8598" stroke-width=".9"/><rect x="199.500" y="104.500" width="6.500" height="6" fill="#dfe6f2" stroke="#7a8598" stroke-width=".9"/>
 <path d="M213 104h7l-3.500 4z" fill="#111"/>
 <ellipse cx="231.500" cy="106" rx="5.500" ry="4.500" fill="#cfe3f8" stroke="#3f78c4" stroke-width="1"/><path d="M227 108c3-1 6-3 8-5" stroke="#3f78c4" stroke-width="1" fill="none"/><path d="M234 111h4l-2 2.300z" fill="#111"/>
 <circle cx="246" cy="106" r="2.600" fill="#b8bcc6" stroke="#70778a" stroke-width=".7"/><path d="M246 100.500v2M246 109.500v2M240.500 106h2M249.500 106h2M242 102l1.400 1.400M248.600 108.600L250 110M242 110l1.400-1.400M248.600 103.400L250 102" stroke="#70778a" stroke-width="1"/>
 <path d="M258 104h7l-3.500 4z" fill="#111"/>
 <path d="M271.500 100v13" stroke="#c9c9c9" stroke-width="1"/>
 <path d="M280 100.500v5" stroke="#a0323c" stroke-width="2"/><path d="M277.500 105.500h5l1.500 5.500h-8z" fill="#b9c0d2" stroke="#6f7892" stroke-width=".8"/>
 <circle cx="294" cy="104.500" r="3" fill="#f1f1f4" stroke="#8d8592" stroke-width="1"/><path d="M296 107l3 4" stroke="#c79a86" stroke-width="1.400"/><path d="M292.500 104.500h3M294 103v3" stroke="#7a2a35" stroke-width=".8"/>
 <circle cx="308.500" cy="104.500" r="3" fill="#f1f1f4" stroke="#8d8592" stroke-width="1"/><path d="M310.500 107l3 4" stroke="#c79a86" stroke-width="1.400"/><path d="M307 104.500h3" stroke="#7a2a35" stroke-width=".8"/>
 <rect x="320.500" y="101" width="4" height="4" fill="none" stroke="#6f7892" stroke-width=".9"/><rect x="326" y="101" width="3" height="9" fill="#e8ecf3" stroke="#6f7892" stroke-width=".9"/><path d="M320.500 107.500l3 3" stroke="#b0606a" stroke-width="1.200"/>
 <rect x="335.500" y="101.500" width="9.500" height="9" fill="#fff" stroke="#333" stroke-width="1.100"/><path d="M335.500 106h9.500M340.200 101.500v9" stroke="#333" stroke-width="1.100"/>
 <path d="M353 109c-2-3-1-7 3-8" stroke="#3f78c4" stroke-width="1.300" fill="none"/><path d="M357 100.500v10" stroke="#555" stroke-width="1"/><path d="M355 103l2-3 2 3" stroke="#3f78c4" stroke-width="1" fill="none"/>
 <path d="M367 106v-3.500c0-1.200 1.500-1.200 1.500 0v-1c0-1.200 1.500-1.200 1.500 0v.6c0-1.200 1.500-1.200 1.500 0v1c0-1 1.500-1 1.500.2v4c0 2-1 3.700-3.500 3.700s-3-1.600-4-3.500c-.6-1.200.6-1.800 1.500-.5z" fill="#f4f4f8" stroke="#555c70" stroke-width=".8"/>
 <path d="M378.500 100v13" stroke="#c9c9c9" stroke-width="1"/>
 <rect x="383.500" y="101.500" width="9.500" height="8" fill="#f1f3f7" stroke="#666e80" stroke-width=".9"/><path d="M388 107h-3m0 0l1.500-1.300m-1.500 1.300l1.500 1.300" stroke="#444" stroke-width=".8" fill="none"/>
 <rect x="398.500" y="101.500" width="9.500" height="8" fill="#f1f3f7" stroke="#666e80" stroke-width=".9"/><path d="M402 107h3m0 0l-1.500-1.300m1.500 1.300l-1.500 1.300" stroke="#444" stroke-width=".8" fill="none"/>
 <path d="M413.500 100v13" stroke="#c9c9c9" stroke-width="1"/>
 <rect x="421" y="100.500" width="5.500" height="5" fill="#f1f3f7" stroke="#555c70" stroke-width=".9"/><rect x="417.500" y="106" width="5.500" height="4.500" fill="#f1f3f7" stroke="#555c70" stroke-width=".9"/><path d="M425 107.500v3" stroke="#333" stroke-width="1"/>
 <rect x="434" y="100.500" width="6" height="5" fill="#dfe6f2" stroke="#3d5fa8" stroke-width=".9"/><path d="M436 105.500l3 5M441 111h4l-2 2.300z" stroke="#333" stroke-width="1" fill="#111"/>
 <rect x="448.500" y="100.500" width="7" height="5.500" fill="#f1f3f7" stroke="#666e80" stroke-width=".9"/><rect x="451" y="104" width="5" height="5" fill="#dfe6f2" stroke="#666e80" stroke-width=".9"/>
</svg>

<!-- left panel -->
<div class="a" style="left:0;top:68px;width:189px;height:22px;background:linear-gradient(#dfeaf7,#f4f8fc 50%,#eaf1f9)"></div>
<svg style="left:135px;top:74px" width="14" height="9" viewBox="0 0 14 9"><path d="M0 0.5h14L7 8.5z" fill="#000"/></svg>
<svg style="left:158px;top:72px" width="6" height="11" viewBox="0 0 6 11"><path d="M1.5 1h3v4.5h-3zM0.5 5.5h5M3 5.5v4.5" stroke="#111" stroke-width="1" fill="none"/></svg>
<svg style="left:170.5px;top:70.5px" width="16" height="16" viewBox="0 0 16 16"><path d="M1.5 1.5l13 13M14.5 1.5l-13 13" stroke="#000" stroke-width="3" fill="none"/></svg>
<div class="a" style="left:3px;top:90px;width:184px;height:348px;background:#fcfcfc"></div>
<div class="a" style="left:0;top:90px;width:3px;height:546px;background:#ececec"></div>
<div class="a" style="left:3px;top:90px;width:1px;height:348px;background:#c8c8c8"></div>
<div class="a" style="left:3px;top:92px;width:184px;height:17px;background:#fff;border:1px solid #8e9199;border-radius:2px"></div>
<div class="a" style="left:170.5px;top:93px;width:1px;height:15px;background:#b5b8bf"></div>
<svg style="left:175px;top:98.5px" width="6" height="4" viewBox="0 0 6 4"><path d="M0 0h6L3 3.6z" fill="#111"/></svg>
<svg style="left:6.5px;top:95px" width="11" height="10" viewBox="0 0 11 10"><path d="M1 8.5h9v-2l-2-1.5H3l-2 1.5z" fill="#b9cfee" stroke="#5f86c4" stroke-width=".8"/><path d="M3.5 5V2.2l2-1 2 1V5" fill="#dfe9f8" stroke="#6a8fc9" stroke-width=".8"/></svg>
<div class="a" style="left:5.5px;top:114.5px;width:19.5px;height:19.5px;background:linear-gradient(#f3a23e,#f8c57a 55%,#fce6bd);border:1px solid #e3b776"></div>
<svg style="left:0;top:114px" width="189" height="21" viewBox="0 114 189 21">
<path d="M12.500 116.500v9.500l2.300-2.100 1.700 3.800 1.400-.7-1.700-3.700h3z" fill="#111"/>
<path d="M8 132.5h3v-3M18 132.5h4" stroke="#444" stroke-width=".9" fill="none"/>
<rect x="28.5" y="118" width="12" height="10" fill="none" stroke="#333" stroke-width="1" stroke-dasharray="2 1.4"/><path d="M28 132.5h3v-3h3M41 131l2 1.5-2 1.5z" stroke="#444" stroke-width=".9" fill="#222"/>
<rect x="53" y="117.5" width="7" height="5" fill="#d6e6fa" stroke="#4d7fc4" stroke-width="1"/><path d="M56.5 122.5v4M50 126.5h8v4h-8z" stroke="#6f8fb8" stroke-width=".9" fill="#eef3fa"/><path d="M46 132.5h3v-3h3M60 131l2 1.5-2 1.5z" stroke="#555" stroke-width=".9" fill="#222"/>
<path d="M71.5 117v7" stroke="#9a3b3b" stroke-width="2.2"/><path d="M68.5 124.5h6l1.2 6h-8.4z" fill="#c9ccd6" stroke="#7c7f8c" stroke-width=".8"/><path d="M65 132.5h3v-3M79 131l2 1.5-2 1.5z" stroke="#555" stroke-width=".9" fill="#222"/>
<ellipse cx="88.5" cy="122.5" rx="5.5" ry="4.5" fill="#e89632" stroke="#a8601a" stroke-width=".8"/><circle cx="86.5" cy="121.5" r="1.1" fill="#fff5d0"/><circle cx="90" cy="120.8" r="1" fill="#7a3a10"/><path d="M83 128.5h8v3.5h-8z" fill="#e8ecf3" stroke="#8a93a6" stroke-width=".8"/><path d="M98 131l2 1.5-2 1.5z" fill="#222"/>
<circle cx="111.5" cy="120" r="3" fill="#f7d64a" stroke="#b99416" stroke-width=".8"/><path d="M104.5 118v8M107 122l-2.5 3.5M111.5 123v4" stroke="#5a7fb5" stroke-width="1"/><path d="M104 128.5h8v3.5h-8z" fill="#e8ecf3" stroke="#8a93a6" stroke-width=".8"/><path d="M116 131l2 1.5-2 1.5z" fill="#222"/>
<rect x="122.500" y="117.5" width="12" height="11" fill="#fff" stroke="#333" stroke-width="1"/><path d="M127 125l5-5M129 119.5h3.500v3.5" stroke="#222" stroke-width="1" fill="none"/><path d="M122 132.5h3v-3M135 131l2 1.5-2 1.5z" stroke="#555" stroke-width=".9" fill="#222"/>
<path d="M141.500 118l10 10M151.500 118l-10 10" stroke="#d22a2a" stroke-width="1.6"/><path d="M141 132.500h3v-3h4v3" stroke="#666" stroke-width=".9" fill="none"/>
<path d="M161 121.500h11" stroke="#7fa0cf" stroke-width="1"/><circle cx="161.500" cy="121.500" r="1.5" fill="#cfe0f6" stroke="#5c83bd" stroke-width=".7"/><circle cx="171.500" cy="121.500" r="1.5" fill="#cfe0f6" stroke="#5c83bd" stroke-width=".7"/><path d="M160 132.500h3v-4h3v4M168 128v4.500M172 131l2 1.500-2 1.500z" stroke="#666" stroke-width=".9" fill="none"/>
<path d="M7 132.800h3.500v-3.200h3.500v-2.600h3.600v5.800h3.400" stroke="#9a9a9a" stroke-width="1" fill="none" opacity=".85"/><path d="M26 132.800h3.500v-3.200h3.500v-2.600h3.600v5.800h3.400" stroke="#9a9a9a" stroke-width="1" fill="none" opacity=".85"/><path d="M45 132.800h3.500v-3.200h3.500v-2.600h3.600v5.800h3.400" stroke="#9a9a9a" stroke-width="1" fill="none" opacity=".85"/><path d="M64 132.800h3.500v-3.200h3.500v-2.600h3.600v5.800h3.400" stroke="#9a9a9a" stroke-width="1" fill="none" opacity=".85"/><path d="M83 132.800h3.500v-3.200h3.500v-2.600h3.600v5.800h3.400" stroke="#9a9a9a" stroke-width="1" fill="none" opacity=".85"/><path d="M102 132.800h3.500v-3.200h3.500v-2.600h3.600v5.800h3.400" stroke="#9a9a9a" stroke-width="1" fill="none" opacity=".85"/><path d="M121 132.800h3.500v-3.200h3.500v-2.600h3.600v5.800h3.400" stroke="#9a9a9a" stroke-width="1" fill="none" opacity=".85"/><path d="M140 132.800h3.500v-3.200h3.500v-2.600h3.600v5.800h3.400" stroke="#9a9a9a" stroke-width="1" fill="none" opacity=".85"/><path d="M159 132.800h3.500v-3.200h3.500v-2.600h3.600v5.800h3.400" stroke="#9a9a9a" stroke-width="1" fill="none" opacity=".85"/>
</svg>
<div class="bar" style="top:139.500px;height:15px"></div>
<svg style="left:5px;top:142px" width="12" height="9" viewBox="0 0 12 9"><path d="M1 8L11 1" stroke="#b9bcc6" stroke-width="1.2"/></svg>
<svg style="left:173.3px;top:143.8px" width="8" height="6" viewBox="0 0 8 6"><path d="M0.8 1l3.2 3 3.200-3" stroke="#1c1c1c" stroke-width="2.300" fill="none"/></svg>
<div class="a" style="left:2px;top:160px;width:185px;height:13px;background:linear-gradient(#e4f0fb,#cfe4f7);"></div>
<svg style="left:5px;top:159.500px" width="12" height="12" viewBox="0 0 12 12"><circle cx="4" cy="3.500" r="2.600" fill="#f6e27a" stroke="#b79b1e" stroke-width=".7"/><path d="M5.500 5.500l4 5" stroke="#5b82bf" stroke-width="1.100"/></svg>
<svg style="left:136.500px;top:161.500px" width="35" height="9" viewBox="0 0 35 9"><g fill="#1b2b3c"><rect x="0" y="0" width="3.600" height="3.600"/><rect x="4.800" y="0" width="3.600" height="3.600"/><rect x="0" y="4.800" width="3.600" height="3.600"/><rect x="4.800" y="4.800" width="3.600" height="3.600"/><rect x="12.500" y="0" width="8.500" height="1.700"/><rect x="12.500" y="3.300" width="8.500" height="1.700"/><rect x="12.500" y="6.600" width="8.500" height="1.700"/><rect x="24.500" y="0" width="9" height="3.600"/><rect x="24.500" y="4.800" width="9" height="3.600"/></g></svg>
<svg style="left:173.3px;top:163.3px" width="8" height="6" viewBox="0 0 8 6"><path d="M0.800 4.500l3.200-3 3.200 3" stroke="#1c1c1c" stroke-width="2.300" fill="none"/></svg>
<div class="a" style="left:4px;top:174.500px;width:12px;height:221.500px;background:linear-gradient(90deg,#cfcfda,#ebebf1 70%,#fbfbfd)"></div>
<div class="rowsep" style="top:213.8px"></div>
<div class="a" style="left:4px;top:213.8px;width:12px;height:1px;background:#fff"></div>
<div class="rowsep" style="top:234px"></div>
<div class="a" style="left:4px;top:234px;width:12px;height:1px;background:#fff"></div>
<div class="rowsep" style="top:254.7px"></div>
<div class="a" style="left:4px;top:254.7px;width:12px;height:1px;background:#fff"></div>
<div class="rowsep" style="top:275.2px"></div>
<div class="a" style="left:4px;top:275.2px;width:12px;height:1px;background:#fff"></div>
<div class="rowsep" style="top:295.5px"></div>
<div class="a" style="left:4px;top:295.5px;width:12px;height:1px;background:#fff"></div>
<div class="rowsep" style="top:334.7px"></div>
<div class="a" style="left:4px;top:334.7px;width:12px;height:1px;background:#fff"></div>
<div class="rowsep" style="top:354.6px"></div>
<div class="a" style="left:4px;top:354.6px;width:12px;height:1px;background:#fff"></div>
<div class="rowsep" style="top:374.8px"></div>
<div class="a" style="left:4px;top:374.8px;width:12px;height:1px;background:#fff"></div>
<div class="bar" style="top:402px;height:16px"></div>
<div class="bar" style="top:421px;height:16px"></div>
<svg style="left:173.3px;top:407px" width="8" height="6" viewBox="0 0 8 6"><path d="M0.8 1l3.2 3 3.200-3" stroke="#1c1c1c" stroke-width="2.300" fill="none"/></svg>
<svg style="left:173.3px;top:426px" width="8" height="6" viewBox="0 0 8 6"><path d="M0.8 1l3.2 3 3.200-3" stroke="#1c1c1c" stroke-width="2.300" fill="none"/></svg>
<svg style="left:5px;top:404.500px" width="12" height="11" viewBox="0 0 12 11"><circle cx="3.500" cy="3.500" r="2.700" fill="#f2dc5a" stroke="#a88f1c" stroke-width=".7"/><path d="M5 5l4.500 4.500M7 4h3.500v3.500" stroke="#7a6a4a" stroke-width="1" fill="none"/></svg>
<svg style="left:5px;top:424px" width="12" height="10" viewBox="0 0 12 10"><path d="M1 7.500L4 1.500l6 2.500-1.500 5z" fill="#7fb0e6" stroke="#2f66b3" stroke-width=".9"/><path d="M4 1.500l1.500 5L10 4" stroke="#2f66b3" stroke-width=".7" fill="none"/></svg>
<svg style="left:0;top:0" width="189" height="400" viewBox="0 0 189 400" font-family="Liberation Serif,serif">
<text x="10.6" y="198.5" font-family="Liberation Sans,sans-serif" font-size="10.5" fill="#777" text-anchor="middle">Q</text>
<text x="10.6" y="228.0" font-family="Liberation Sans,sans-serif" font-size="10.5" fill="#777" text-anchor="middle">W</text>
<text x="10.6" y="248.3" font-family="Liberation Sans,sans-serif" font-size="10.5" fill="#777" text-anchor="middle">E</text>
<text x="10.6" y="268.5" font-family="Liberation Sans,sans-serif" font-size="10.5" fill="#777" text-anchor="middle">R</text>
<text x="10.6" y="289.0" font-family="Liberation Sans,sans-serif" font-size="10.5" fill="#777" text-anchor="middle">T</text>
<text x="10.6" y="318.8" font-family="Liberation Sans,sans-serif" font-size="10.5" fill="#777" text-anchor="middle">A</text>
<text x="10.6" y="348.4" font-family="Liberation Sans,sans-serif" font-size="10.5" fill="#777" text-anchor="middle">S</text>
<text x="10.6" y="368.6" font-family="Liberation Sans,sans-serif" font-size="10.5" fill="#777" text-anchor="middle">D</text>
<text x="10.6" y="389.8" font-family="Liberation Sans,sans-serif" font-size="10.5" fill="#777" text-anchor="middle">F</text>
<g transform="translate(25.6,185.0)"><circle cx="2" cy="-3" r="2.800" fill="#f2dc5a" stroke="#b79b1e" stroke-width=".7"/><path d="M-5-4l4 6 2-3M-1 2v5" stroke="#7590c4" stroke-width="1.100" fill="none"/><circle cx="-5" cy="-4" r="1.1" fill="#cfe0f6" stroke="#7590c4" stroke-width=".7"/></g>
<g transform="translate(44.5,185.0)"><path d="M-5 5L5-5" stroke="#7590c4" stroke-width="1.100"/><circle cx="-5" cy="5" r="1.1" fill="#cfe0f6" stroke="#7590c4" stroke-width=".7"/><circle cx="5" cy="-5" r="1.1" fill="#cfe0f6" stroke="#7590c4" stroke-width=".7"/></g>
<g transform="translate(63.4,185.0)"><path d="M-6 0l6-5 6 5M-6 4.500l6-5 6 5" stroke="#8e97aa" stroke-width="1.100" fill="none"/></g>
<g transform="translate(82.3,185.0)"><path d="M-3.500 0h7M0-3.500v7" stroke="#8e97aa" stroke-width="1.100"/><path d="M5.5 3.5l2.2 1.500-2.200 1.500z" fill="#222"/></g>
<g transform="translate(101.2,185.0)"><path d="M-6 5l3-10 5 9 3-9" stroke="#6a7f55" stroke-width="1.100" fill="none"/><circle cx="-6" cy="5" r="1.1" fill="#cfe0f6" stroke="#7590c4" stroke-width=".7"/><circle cx="-3" cy="-5" r="1.1" fill="#cfe0f6" stroke="#7590c4" stroke-width=".7"/><circle cx="2" cy="4" r="1.1" fill="#cfe0f6" stroke="#7590c4" stroke-width=".7"/><circle cx="5" cy="-5" r="1.1" fill="#cfe0f6" stroke="#7590c4" stroke-width=".7"/><path d="M7 4l2.2 1.500-2.200 1.500z" fill="#222"/></g>
<g transform="translate(120.1,185.0)"><path d="M-6 5l2-9 4 8 2-8" stroke="#7590c4" stroke-width="1.200" fill="none"/><path d="M1 4l6-8" stroke="#c9962a" stroke-width="2.200"/><path d="M1 4l1.500-2" stroke="#333" stroke-width="2"/></g>
<g transform="translate(139.0,185.0)"><path d="M-5.500 5c0-14 5-12 5.500-4s5 8 5.500-6" stroke="#7590c4" stroke-width="1.200" fill="none"/></g>
<g transform="translate(157.9,185.0)"><path d="M5-5l-10 5 10 5" stroke="#7590c4" stroke-width="1.100" fill="none"/><circle cx="5" cy="-5" r="1.3" fill="#cfe0f6" stroke="#7590c4" stroke-width=".7"/><circle cx="-5" cy="0" r="1.3" fill="#cfe0f6" stroke="#7590c4" stroke-width=".7"/><circle cx="5" cy="5" r="1.3" fill="#cfe0f6" stroke="#7590c4" stroke-width=".7"/></g>
<g transform="translate(25.6,204.0)"><path d="M-5-5v10M-5 0h6M5-5c-4 2-4 8 0 10" stroke="#8e97aa" stroke-width="1.100" fill="none"/></g>
<g transform="translate(44.5,204.0)"><path d="M-3-4v9M-4 5l10-4M-3 5l6-1" stroke="#7590c4" stroke-width="1.100" fill="none"/><circle cx="-3" cy="-4" r="1.5" fill="#cfe0f6" stroke="#7590c4" stroke-width=".7"/></g>
<g transform="translate(25.6,224.2)"><rect x="-6" y="-4" width="12" height="8.500" fill="#e6eefa" stroke="#7590c4" stroke-width="1"/></g>
<g transform="translate(44.5,224.2)"><path d="M-6 4.500v-5l3-4h8l1 4-3 1 2 4z" fill="#e6eefa" stroke="#7590c4" stroke-width="1"/></g>
<g transform="translate(63.4,224.2)"><path d="M-4-5.500l4 0 5 6-5 5-4-1 2-5z" fill="#e6eefa" stroke="#7590c4" stroke-width="1"/></g>
<g transform="translate(82.3,224.2)"><circle cx="0" cy="1" r="5.500" fill="#e6eefa" stroke="#7590c4" stroke-width="1"/><circle cx="0" cy="1" r="1" fill="#cfe0f6" stroke="#7590c4" stroke-width=".7"/><circle cx="2" cy="-5" r="1" fill="#cfe0f6" stroke="#7590c4" stroke-width=".7"/></g>
<g transform="translate(25.6,244.5)"><circle cx="0" cy="0" r="5.800" fill="#f4f8fd" stroke="#7590c4" stroke-width="1"/></g>
<g transform="translate(44.5,244.5)"><ellipse cx="0" cy="0" rx="6.500" ry="4.500" fill="#f4f8fd" stroke="#7590c4" stroke-width="1"/></g>
<g transform="translate(63.4,244.5)"><path d="M-5 5.500c6-2 9-6 9.500-11" stroke="#9a8a3a" stroke-width="1.200" fill="none"/></g>
<g transform="translate(82.3,244.5)"><path d="M-5-5c12-2 12 10 2 10" stroke="#7590c4" stroke-width="1.100" fill="none"/><circle cx="-5" cy="-5" r="1.2" fill="#cfe0f6" stroke="#7590c4" stroke-width=".7"/><circle cx="-3" cy="5" r="1.2" fill="#cfe0f6" stroke="#7590c4" stroke-width=".7"/></g>
<g transform="translate(101.2,244.5)"><path d="M-5-3c6-3 10 2 9 8" stroke="#7590c4" stroke-width="1.100" fill="none"/><circle cx="-5" cy="-3" r="1.2" fill="#cfe0f6" stroke="#7590c4" stroke-width=".7"/><circle cx="4" cy="5" r="1.2" fill="#cfe0f6" stroke="#7590c4" stroke-width=".7"/><circle cx="-4" cy="3" r="1.2" fill="#cfe0f6" stroke="#7590c4" stroke-width=".7"/></g>
<g transform="translate(120.1,244.5)"><path d="M-6 5c0-14 12-14 12 0" stroke="#8e97aa" stroke-width="1" fill="none"/><path d="M0 5v-8M-2-1l2-3 2 3z" stroke="#222" stroke-width="1" fill="#222"/></g>
<g transform="translate(139.0,244.5)"><path d="M-5 5c2-6 5-9 10-10" stroke="#a8b0c2" stroke-width="1.100" fill="none"/></g>
<g transform="translate(157.9,244.5)"><path d="M-6 6c2-6 5-9 10-10" stroke="#a8b0c2" stroke-width="1.500" fill="none"/><text x="2" y="0" font-size="7" font-weight="700" fill="#222" font-family="Liberation Sans">2</text></g>
<g transform="translate(25.6,264.7)"><rect x="-6.500" y="-6.500" width="13" height="13" fill="#1e3f74"/><rect x="-4.500" y="-4.500" width="9" height="9" fill="#bcd3ef" stroke="#fff" stroke-width=".8"/><path d="M-4 4l8-8M-4 0l4-4M0 4l4-4" stroke="#3d64a3" stroke-width=".9"/></g>
<g transform="translate(44.5,264.7)"><circle cx="0" cy="0" r="6.500" fill="#7fa6dc" stroke="#2b4f8d" stroke-width=".9"/><rect x="-3" y="-3.500" width="6" height="7" fill="#e6eefa" stroke="#2b4f8d" stroke-width=".8"/><path d="M-6 2l5-6M1 6l5-6" stroke="#e9f1fb" stroke-width=".9"/></g>
<g transform="translate(63.4,264.7)"><path d="M-6 6v-9l3-3h6l3 3v9z" fill="#9fc0ea" stroke="#3d64a3" stroke-width=".9"/><path d="M-5 3l7-8M-4 6l9-10M0 6l6-7" stroke="#e9f1fb" stroke-width=".9"/></g>
<g transform="translate(82.3,264.7)"><path d="M-6-6l12 12" stroke="#4f87c9" stroke-width="3.200"/><path d="M-6-6l12 12" stroke="#cfe3f8" stroke-width="1" stroke-dasharray="1.500 1.500"/></g>
<g transform="translate(101.2,264.7)"><path d="M-6 6v-9l3-3h6l3 3v9z" fill="#9fc0ea" stroke="#3d64a3" stroke-width=".9"/><path d="M-5 3l7-8M-4 6l9-10M0 6l6-7" stroke="#e9f1fb" stroke-width=".9"/><text x="-1" y="4" font-size="9" font-weight="700" fill="#b0209a" font-family="Liberation Sans">3</text></g>
<g transform="translate(120.1,264.7)"><path d="M-6-2h9l2-3h-8z" fill="#8793ac" stroke="#4c5670" stroke-width=".7"/><path d="M-6 6h9v-4h-6z" fill="#cfd6e4" stroke="#4c5670" stroke-width=".8"/><path d="M4-4l3 3-1 1" stroke="#222" stroke-width="1" fill="none"/></g>
<g transform="translate(139.0,264.7)"><path d="M-6 6v-9l3-3h6l3 3v9z" fill="#7fa6dc" stroke="#3d64a3" stroke-width=".9"/><path d="M-5 3l7-8M-4 6l9-10M0 6l6-7" stroke="#e9f1fb" stroke-width=".9"/><path d="M-2 4l8-9" stroke="#c89a28" stroke-width="2.400"/><path d="M-2 4l1.500-1.700" stroke="#222" stroke-width="2.200"/></g>
<g transform="translate(157.9,264.7)"><path d="M-6 6v-9l3-3h6l3 3v9z" fill="#c4d6ee" stroke="#3d64a3" stroke-width=".9"/><path d="M-5 3l7-8M-4 6l9-10M0 6l6-7" stroke="#e9f1fb" stroke-width=".9"/><path d="M-5-3l9 9M4-3l-9 9" stroke="#d22a2a" stroke-width="1.500"/></g>
<g transform="translate(25.6,285.2)"><path d="M-6.500-6v12M-4.500-6v12M-2.500-6v12" stroke="#333" stroke-width="1"/><path d="M-1 4v-6l3-2 4 3-3 5z" fill="#cfe0f6" stroke="#7590c4" stroke-width=".9"/></g>
<g transform="translate(44.5,285.2)"><path d="M-6 0l5-4 3 4-4 5z" fill="#fff" stroke="#444" stroke-width=".9" stroke-dasharray="1.500 1"/><path d="M0-2l4-3 3 4-3 4z" fill="#cfe0f6" stroke="#7590c4" stroke-width=".9"/><path d="M-4-6h4l-1 2" stroke="#222" stroke-width=".9" fill="none"/></g>
<g transform="translate(63.4,285.2)"><path d="M-6 1l4-4 4 4-4 5z" fill="#fff" stroke="#7590c4" stroke-width=".9"/><text x="1" y="0" font-size="8.500" font-weight="700" fill="#b0209a" font-family="Liberation Sans">?</text></g>
<g transform="translate(82.3,285.2)"><path d="M-6 0l5-4 3 4-4 5z" fill="#fff" stroke="#444" stroke-width=".9" stroke-dasharray="1.500 1"/><path d="M0-2l4-3 3 4-3 4z" fill="#cfe0f6" stroke="#7590c4" stroke-width=".9"/><path d="M-4 5l9-7" stroke="#c98a2a" stroke-width="2"/></g>
<g transform="translate(101.2,285.2)"><path d="M-6.500-6v12M-4.500-6v12M-2.500-6v12" stroke="#333" stroke-width="1"/><path d="M-2-3l9 8M7-3l-9 8" stroke="#d22a2a" stroke-width="1.500"/></g>
<g transform="translate(25.6,305.4)"><text x="-5" y="5" font-size="14.5" font-weight="700" fill="#8e1f2f">A</text></g>
<g transform="translate(44.5,305.4)"><text x="0" y="2" font-size="9" font-weight="700" fill="#8e1f2f">A</text><path d="M-6 5l6-5M-6 5l1-3M-6 5l3 0" stroke="#222" stroke-width="1" fill="none"/></g>
<g transform="translate(63.4,305.4)"><text x="-6" y="6" font-size="9" font-weight="700" fill="#8e1f2f">A</text><text x="1" y="-1" font-size="7" font-weight="700" fill="#3a62b0">B</text><path d="M1 5l3-3" stroke="#222" stroke-width="1"/></g>
<g transform="translate(82.3,305.4)"><text x="-7.5" y="-0.5" font-size="7.5" font-weight="700" fill="#8e1f2f">ABC</text><path d="M-2 3l2 3 3-5" stroke="#444" stroke-width="1.200" fill="none"/></g>
<g transform="translate(101.2,305.4)"><text x="-6.5" y="5.5" font-size="15.5" font-weight="700" fill="#8e1f2f">C</text><text x="3" y="-2" font-size="7" font-weight="700" fill="#8e1f2f">C</text><path d="M3 5l3-3" stroke="#222" stroke-width="1"/></g>
<g transform="translate(120.1,305.4)"><text x="-7.5" y="6.5" font-size="7.5" font-weight="700" fill="#8e1f2f">ABC</text><text x="-1.5" y="-1" font-size="8" font-weight="700" fill="#b0209a">?</text></g>
<g transform="translate(139.0,305.4)"><text x="-6" y="6.5" font-size="8.5" font-weight="700" fill="#8e1f2f">A</text><text x="0" y="-1" font-size="7" font-weight="700" fill="#8e1f2f">A</text><path d="M1 5l3-3" stroke="#222" stroke-width="1"/></g>
<g transform="translate(157.9,305.4)"><text x="-6" y="6.5" font-size="8.5" font-weight="700" fill="#8e1f2f">A</text><text x="0" y="-1" font-size="6.5" font-weight="700" fill="#3a62b0">ół</text><path d="M1 5l3-3" stroke="#222" stroke-width="1"/></g>
<g transform="translate(25.6,324.4)"><text x="-5" y="-0.5" font-size="8" font-weight="700" fill="#8e1f2f">I</text><path d="M-3 3h7M0.500 0v6" stroke="#8e1f2f" stroke-width="1"/></g>
<g transform="translate(44.5,324.4)"><text x="-7" y="-0.5" font-size="6.5" font-weight="700" fill="#8e1f2f">A1A</text><text x="-4" y="6" font-size="6.5" font-weight="700" fill="#8e1f2f">A2A</text></g>
<g transform="translate(63.4,324.4)"><text x="-7" y="0" font-size="7" font-weight="700" fill="#3a62b0">ół</text><text x="-2" y="6.5" font-size="7" font-weight="700" fill="#8e1f2f">ół</text></g>
<g transform="translate(82.3,324.4)"><text x="-7" y="0" font-size="7" font-weight="700" fill="#3a62b0">ół</text><text x="-2" y="6.5" font-size="7" font-weight="700" fill="#8e1f2f">ół</text></g>
<g transform="translate(101.2,324.4)"><rect x="-7" y="-4" width="14" height="9" fill="none" stroke="#8e1f2f" stroke-width=".8" stroke-dasharray="1.500 1"/><text x="-6" y="3.5" font-size="6.5" font-weight="700" fill="#8e1f2f">ABC</text></g>
<g transform="translate(120.1,324.4)"><path d="M-7-4h14M-7-1h14M-7 2h14M-7 5h14" stroke="#444" stroke-width="1" stroke-dasharray="2 1.200"/></g>
<g transform="translate(25.6,344.6)"><path d="M-5.5 -0.0L5.5 0.0M-3.9 -3.9L3.9 3.9M-0.0 -5.5L0.0 5.5M3.9 -3.9L-3.9 3.9" stroke="#3f7fd0" stroke-width="1"/></g>
<g transform="translate(44.5,344.6)"><path d="M-3-6v12M3-6v12" stroke="#6f7c92" stroke-width="1" stroke-dasharray="2 1"/><g transform="translate(-3,-3) scale(.5)"><path d="M-5.5 -0.0L5.5 0.0M-3.9 -3.9L3.9 3.9M-0.0 -5.5L0.0 5.5M3.9 -3.9L-3.9 3.9" stroke="#3f7fd0" stroke-width="1"/></g><g transform="translate(3,3) scale(.5)"><path d="M-5.5 -0.0L5.5 0.0M-3.9 -3.9L3.9 3.9M-0.0 -5.5L0.0 5.5M3.9 -3.9L-3.9 3.9" stroke="#3f7fd0" stroke-width="1"/></g><g transform="translate(3,-3) scale(.5)"><path d="M-5.5 -0.0L5.5 0.0M-3.9 -3.9L3.9 3.9M-0.0 -5.5L0.0 5.5M3.9 -3.9L-3.9 3.9" stroke="#3f7fd0" stroke-width="1"/></g><g transform="translate(-3,3) scale(.5)"><path d="M-5.5 -0.0L5.5 0.0M-3.9 -3.9L3.9 3.9M-0.0 -5.5L0.0 5.5M3.9 -3.9L-3.9 3.9" stroke="#3f7fd0" stroke-width="1"/></g></g>
<g transform="translate(63.4,344.6)"><g transform="translate(2,-3) scale(.55)"><path d="M-5.5 -0.0L5.5 0.0M-3.9 -3.9L3.9 3.9M-0.0 -5.5L0.0 5.5M3.9 -3.9L-3.9 3.9" stroke="#3f7fd0" stroke-width="1"/></g><g transform="translate(-4,3) scale(.45)"><path d="M-5.5 -0.0L5.5 0.0M-3.9 -3.9L3.9 3.9M-0.0 -5.5L0.0 5.5M3.9 -3.9L-3.9 3.9" stroke="#3f7fd0" stroke-width="1"/></g><path d="M1 5l3-3" stroke="#222" stroke-width="1"/></g>
<g transform="translate(82.3,344.6)"><g transform="translate(-1,1) scale(.85)"><path d="M-5.5 -0.0L5.5 0.0M-3.9 -3.9L3.9 3.9M-0.0 -5.5L0.0 5.5M3.9 -3.9L-3.9 3.9" stroke="#3f7fd0" stroke-width="1"/></g><circle cx="4.500" cy="-4.500" r="1.600" fill="none" stroke="#222" stroke-width=".9"/></g>
<g transform="translate(101.2,344.6)"><g transform="translate(-1,1) scale(.85)"><path d="M-5.5 -0.0L5.5 0.0M-3.9 -3.9L3.9 3.9M-0.0 -5.5L0.0 5.5M3.9 -3.9L-3.9 3.9" stroke="#3f7fd0" stroke-width="1"/></g><text x="2" y="-1" font-size="8" font-weight="700" fill="#b0209a" font-family="Liberation Sans">?</text></g>
<g transform="translate(120.1,344.6)"><path d="M-5 5L5-5M5-5h-4M5-5v4" stroke="#333" stroke-width="1.200" fill="none"/></g>
<g transform="translate(139.0,344.6)"><g transform="translate(-3,-3) scale(.55)"><path d="M-5.5 -0.0L5.5 0.0M-3.9 -3.9L3.9 3.9M-0.0 -5.5L0.0 5.5M3.9 -3.9L-3.9 3.9" stroke="#3f7fd0" stroke-width="1"/></g><g transform="translate(3.500,-3) scale(.55)"><path d="M-5.5 -0.0L5.5 0.0M-3.9 -3.9L3.9 3.9M-0.0 -5.5L0.0 5.5M3.9 -3.9L-3.9 3.9" stroke="#3f7fd0" stroke-width="1"/></g><g transform="translate(-3,3.500) scale(.55)"><path d="M-5.5 -0.0L5.5 0.0M-3.9 -3.9L3.9 3.9M-0.0 -5.5L0.0 5.5M3.9 -3.9L-3.9 3.9" stroke="#3f7fd0" stroke-width="1"/></g><path d="M2 6l3-3" stroke="#222" stroke-width="1"/></g>
<g transform="translate(157.9,344.6)"><rect x="-6.500" y="-6" width="13" height="12" fill="#8c96a8" stroke="#4a556a" stroke-width=".8"/><path d="M-6.500 0h13M0-6v12" stroke="#39445a" stroke-width="1.300"/><path d="M-6.500-3h13M-6.500 3h13M-3.200-6v12M3.200-6v12" stroke="#c9d0dc" stroke-width=".6"/></g>
<g transform="translate(25.6,364.8)"><rect x="-7.500" y="4.300" width="15" height="2.500" fill="#e3dc84" stroke="#a39a4a" stroke-width=".4"/><path d="M-5 4.300v2.500M-2.500 4.300v2.500M0 4.300v2.500M2.500 4.300v2.500M5 4.300v2.500" stroke="#8d853c" stroke-width=".5"/><path d="M-5-2h10" stroke="#7590c4" stroke-width="1" stroke-dasharray="2 1"/><circle cx="-5.5" cy="-2" r="1.2" fill="#cfe0f6" stroke="#7590c4" stroke-width=".7"/><circle cx="5.5" cy="-2" r="1.2" fill="#cfe0f6" stroke="#7590c4" stroke-width=".7"/></g>
<g transform="translate(44.5,364.8)"><rect x="-7.500" y="4.300" width="15" height="2.500" fill="#e3dc84" stroke="#a39a4a" stroke-width=".4"/><path d="M-5 4.300v2.500M-2.500 4.300v2.500M0 4.300v2.500M2.500 4.300v2.500M5 4.300v2.500" stroke="#8d853c" stroke-width=".5"/><path d="M-4-6c6 0 8 4 8 9M-4-6l5 8" stroke="#222" stroke-width="1.100" fill="none"/></g>
<g transform="translate(63.4,364.8)"><rect x="-7.500" y="4.300" width="15" height="2.500" fill="#e3dc84" stroke="#a39a4a" stroke-width=".4"/><path d="M-5 4.300v2.500M-2.500 4.300v2.500M0 4.300v2.500M2.500 4.300v2.500M5 4.300v2.500" stroke="#8d853c" stroke-width=".5"/><path d="M-6 3L3-6M-6 3h11M-1 3c0-2-1-3-2-4" stroke="#333" stroke-width="1" fill="none"/></g>
<g transform="translate(82.3,364.8)"><rect x="-7.500" y="4.300" width="15" height="2.500" fill="#e3dc84" stroke="#a39a4a" stroke-width=".4"/><path d="M-5 4.300v2.500M-2.500 4.300v2.500M0 4.300v2.500M2.500 4.300v2.500M5 4.300v2.500" stroke="#8d853c" stroke-width=".5"/><path d="M-6-5h12M-6 1h12M-6-6v8M6-6v8" stroke="#7590c4" stroke-width="1" fill="none"/><circle cx="-6" cy="-5" r="1" fill="#cfe0f6" stroke="#7590c4" stroke-width=".7"/><circle cx="6" cy="-5" r="1" fill="#cfe0f6" stroke="#7590c4" stroke-width=".7"/></g>
<g transform="translate(101.2,364.8)"><rect x="-7.500" y="4.300" width="15" height="2.500" fill="#e3dc84" stroke="#a39a4a" stroke-width=".4"/><path d="M-5 4.300v2.500M-2.500 4.300v2.500M0 4.300v2.500M2.500 4.300v2.500M5 4.300v2.500" stroke="#8d853c" stroke-width=".5"/><rect x="-7" y="-6" width="14" height="8" rx="4" fill="#e6eefa" stroke="#7590c4" stroke-width="1"/></g>
<g transform="translate(120.1,364.8)"><rect x="-7.500" y="4.300" width="15" height="2.500" fill="#e3dc84" stroke="#a39a4a" stroke-width=".4"/><path d="M-5 4.300v2.500M-2.500 4.300v2.500M0 4.300v2.500M2.500 4.300v2.500M5 4.300v2.500" stroke="#8d853c" stroke-width=".5"/><path d="M-7-2l5-4h9l-4 4zM-7-2v3h10v-3M3 1l4-4v-3" fill="#e6eefa" stroke="#7590c4" stroke-width=".9"/></g>
<g transform="translate(25.6,386.0)"><rect x="-5.500" y="-4" width="11" height="9.500" fill="none" stroke="#7a2a2a" stroke-width="1"/><path d="M-7-4h14" stroke="#7a2a2a" stroke-width="1"/><path d="M-1 2l3-2v3z" fill="#222"/></g>
<g transform="translate(44.5,386.0)"><path d="M-5.500 5.500v-10h11v10M-7-4.500h14" fill="none" stroke="#7a2a2a" stroke-width="1"/></g>
<g transform="translate(63.4,386.0)"><path d="M-5.500-4.500h9v10h-9zM-5.500-4.500l11 10h-4" fill="none" stroke="#7a2a2a" stroke-width="1"/></g>
<g transform="translate(82.3,386.0)"><path d="M-6-3h8M-6 0.500h6M-6 4h8" stroke="#444" stroke-width="1"/><text x="3" y="1" font-size="5.500" fill="#1f5fb0" font-family="Liberation Sans">2</text><text x="3" y="7" font-size="5.500" fill="#1f5fb0" font-family="Liberation Sans">3</text></g>
<g transform="translate(101.2,386.0)"><path d="M-5.500 6v-8h6v8M0.500-2l5-3M-2-5l6 0" fill="none" stroke="#8a8f9a" stroke-width="1"/><path d="M2-1l3-3" stroke="#222" stroke-width="1.200"/></g>
<g transform="translate(120.1,386.0)"><path d="M-5.500 6v-8h6v8M-3-5h9v7" fill="none" stroke="#7a2a2a" stroke-width="1"/></g>
<g transform="translate(139.0,386.0)"><path d="M-6.500 6v-10h13v10z" fill="none" stroke="#7a2a2a" stroke-width="1"/><path d="M-6.500-6v2M6.500-6v2" stroke="#7a2a2a" stroke-width="1"/><circle cx="-6.5" cy="6" r="1.2" fill="#cfe0f6" stroke="#7590c4" stroke-width=".7"/><circle cx="6.5" cy="6" r="1.2" fill="#cfe0f6" stroke="#7590c4" stroke-width=".7"/></g>
</svg>

<!-- gCadas window -->
<div class="a" style="left:356.500px;top:21.500px;width:845.500px;height:79.500px;background:#fff;border:1px solid #7d8187;box-shadow:0 1px 7px rgba(0,0,0,.36)"></div>
<div class="a" style="left:358px;top:52px;width:843px;height:24px;background:#bfdbff"></div>
<div class="a" style="left:358px;top:75px;width:843px;height:2px;background:#d4e6fd"></div>
<div class="a" style="left:358px;top:77px;width:843px;height:23px;background:#bddaff"></div>
<!-- window buttons -->
<svg style="left:1070px;top:24px" width="125" height="26" viewBox="0 0 125 26">
 <path d="M8.3 13.2h10.7" stroke="#333" stroke-width="1.3" fill="none"/>
 <rect x="55.5" y="8.5" width="9.5" height="9.5" stroke="#d0d0d0" stroke-width="1" fill="none"/>
 <path d="M103 8.3l10.2 10.2M113.2 8.3L103 18.5" stroke="#333" stroke-width="1.2" fill="none"/>
</svg>
<!-- app icon -->
<svg style="left:364.800px;top:28.300px" width="16" height="16.200" viewBox="0 0 16.400 16.600">
<defs><linearGradient id="gi2" x1="0" y1="0" x2="1" y2="1"><stop offset="0" stop-color="#0d3f5f"/><stop offset=".5" stop-color="#1b6591"/><stop offset="1" stop-color="#0c3350"/></linearGradient></defs>
 <rect x="0" y="0" width="16.400" height="16.600" rx="2.200" fill="url(#gi2)"/>
 <path d="M1.700 13.700L7.500 2l.4 7.200L13.700 1.100" stroke="#86d3f6" stroke-width="1.500" fill="none" stroke-linejoin="round" opacity=".95"/>
 <path d="M11.600 5.100l.3 4.300" stroke="#5fb6e6" stroke-width="1.300"/>
 <path d="M12.600 15.600v-2.200h2.600" stroke="#d9ecf7" stroke-width="1.300" fill="none"/>
</svg>
<!-- highlighted menu -->
<div class="a" style="left:591.5px;top:52.5px;width:109.5px;height:22px;background:linear-gradient(#fff3c4,#ffe79c 45%,#ffd86c 55%,#ffdf86);border:1px solid #e8c35d;border-bottom:none"></div>
<!-- dropdown -->
<div class="a" style="left:591.5px;top:74.5px;width:266px;height:157.5px;background:#fff;border:1px solid #8b8e94;box-shadow:2px 2px 4px rgba(0,0,0,.35)"></div>
<div class="a" style="left:592.5px;top:75.5px;width:24.5px;height:155.5px;background:#e9eef5"></div>
<div class="a" style="left:617px;top:75.5px;width:1px;height:155.5px;background:#c9cdd3"></div>
<div class="a" style="left:619px;top:97.5px;width:236px;height:1px;background:#c9cdd3"></div>
<div class="a" style="left:619px;top:184.5px;width:236px;height:1px;background:#c9cdd3"></div>
<div class="a" style="left:619px;top:208px;width:236px;height:1px;background:#c9cdd3"></div>
<div class="a" style="left:593px;top:99px;width:263px;height:18.5px;background:linear-gradient(#ffeba6,#ffdb6c 48%,#ffd24e 54%,#ffdc72);border:1px solid #e5b840;border-radius:2px"></div>
<svg style="left:847px;top:127.5px" width="5" height="7" viewBox="0 0 5 7"><path d="M0.5 0.5L4 3.5L0.5 6.5z" fill="#1e1e1e"/></svg>
<!-- gCadas toolbar icons -->
<svg style="left:358px;top:77px;z-index:0" width="234" height="23" viewBox="358 77 234 23">
 <circle cx="372" cy="88.500" r="7.800" fill="#1f7fea"/><circle cx="372.300" cy="84.300" r="1.400" fill="#fff"/><path d="M370.300 87.300h2.700v5M370 92.700h4.600" stroke="#fff" stroke-width="1.700" fill="none"/>
 <rect x="391.500" y="81.500" width="14.500" height="13.500" fill="#fff" stroke="#4f8ea6" stroke-width="1"/><path d="M391.500 85h14.500M391.500 88.300h14.500M391.500 91.600h14.500M395.200 81.500v13.500M398.800 81.500v13.500M402.400 81.500v13.500" stroke="#a9cdd8" stroke-width=".6"/>
 <path d="M415.500 79v19" stroke="#cfe2fb" stroke-width="1"/>
 <g fill="#4f86e6"><circle cx="426.300" cy="85.300" r="2.300"/><circle cx="435.700" cy="85.300" r="2.300"/><path d="M422.500 93.500c0-5 7-5 7 0zM432.500 93.500c0-5 7-5 7 0z"/></g>
 <g fill="#3a6fd8"><circle cx="431" cy="85.500" r="3"/><path d="M425.500 96c0-7 11-7 11 0z"/></g>
 <path d="M451.500 82.500h5v3.500h8.500v9h-13.500z" fill="#8ea3bf" stroke="#2a3340" stroke-width="1"/><g fill="#111"><rect x="450" y="81" width="3" height="3"/><rect x="455" y="81" width="3" height="3"/><rect x="455" y="84.500" width="3" height="3"/><rect x="463.500" y="84.500" width="3" height="3"/><rect x="450" y="93.500" width="3" height="3"/><rect x="463.500" y="93.500" width="3" height="3"/></g>
 <rect x="478.500" y="81" width="12.500" height="11.500" fill="#fbfcfe" stroke="#d5dde8" stroke-width=".8"/><path d="M482 84.500c-1.500 2 0 5 3 4.500l5.500 6c1.200 1.200 3-.5 1.800-1.800l-5.800-5.700c.8-2.500-1-4.500-3.500-4l2 2.200-1.300 1.500z" fill="#aab3c0" stroke="#6f7a8a" stroke-width=".8"/>
 <rect x="505" y="81.500" width="14.500" height="14" fill="#fbfcfe" stroke="#9aa6b8" stroke-width=".9"/><rect x="508" y="84.500" width="8.500" height="8" fill="#e6ebf2" stroke="#222" stroke-width="1.300"/><g fill="#111"><rect x="506.500" y="83" width="3" height="3"/><rect x="515" y="83" width="3" height="3"/><rect x="506.500" y="91" width="3" height="3"/><rect x="515" y="91" width="3" height="3"/></g>
 <rect x="533" y="81.500" width="11.500" height="14" fill="#fdfdff" stroke="#c8cfe0" stroke-width=".9"/><path d="M536.500 81.500v14M541 81.500v14M533 85h11.500M533 92h11.500" stroke="#a9a3c8" stroke-width=".8"/>
 <path d="M560 89c3-5.500 10.500-5.500 14 0-3.500 5-11 5-14 0z" fill="none" stroke="#5aa6ea" stroke-width="1.300"/><circle cx="567" cy="89" r="2.300" fill="#5aa6ea"/><path d="M561 94.500l12-11" stroke="#5aa6ea" stroke-width="1.500"/>
 <path d="M586.500 86l5-2.500M586.500 90l5-2.500M586.500 94l5-2.500" stroke="#5aa6ea" stroke-width="1.400"/>
</svg>

<!-- Element Selection floating window -->
<div class="a" style="left:955px;top:187px;width:213px;height:98.500px;background:#f0f0f0;box-shadow:0 1px 6px rgba(0,0,0,.35);border:1px solid #b9c6c9"></div>
<div class="a" style="left:956px;top:188px;width:211px;height:23.500px;background:#fff"></div>
<svg style="left:955px;top:187px" width="213" height="99" viewBox="955 187 213 99">
 <!-- icon -->
 <path d="M960.500 193c1-2.500 4-2.500 5 0l3 7c1 3-1.500 6-4.500 5.500-2.500-.5-3-2-3.500-4z" fill="#b8b8b8" stroke="#8f8f8f" stroke-width=".8"/><path d="M962 196l3 7M964 194l2.500 7" stroke="#e8e8e8" stroke-width=".8"/>
 <!-- buttons -->
 <path d="M1044.500 198h11" stroke="#9a9a9a" stroke-width="1.100"/>
 <rect x="1091.500" y="194" width="10" height="10" fill="none" stroke="#e3e3e3" stroke-width="1"/>
 <path d="M1139 194l10.500 10.500M1149.500 194l-10.500 10.500" stroke="#9a9a9a" stroke-width="1.100"/>
 <!-- row 1 -->
 <path d="M968.500 234v-15.500h73" stroke="#a9a9a9" stroke-width="1" fill="none"/>
 <rect x="970.500" y="220.500" width="13.500" height="13.500" fill="#f6cf7c" stroke="#b49355" stroke-width="1"/>
 <path d="M977 222.500v9.500M972.500 227.500h9.500" stroke="#3a4a6a" stroke-width="1"/><circle cx="977" cy="227.500" r="2.200" fill="#3f6fc4"/>
 <rect x="986.500" y="224.500" width="8.500" height="6" fill="#f4f8fd" stroke="#3f6fc4" stroke-width="1"/>
 <path d="M1000.500 230.500l2.500-6h7l-2.500 6z" fill="#f4f8fd" stroke="#3f6fc4" stroke-width="1"/>
 <circle cx="1019" cy="227.500" r="3.800" fill="#f4f8fd" stroke="#3f6fc4" stroke-width="1"/>
 <path d="M1030.500 230.500l6.500-6.500" stroke="#8a93a6" stroke-width="1.100"/>
 <!-- row 2 -->
 <path d="M968.500 262.500v-16h73" stroke="#a9a9a9" stroke-width="1" fill="none"/>
 <rect x="970.500" y="248.500" width="13.500" height="13.500" fill="#f3d9a0" stroke="#9a8f78" stroke-width="1"/>
 <path d="M972.500 250.500l6 6M979.500 250.500l-6 6M976 249.500v6" stroke="#d19a3a" stroke-width=".9"/><path d="M977 254.500l4 0 0 5-3 1-2.500-3z" fill="#fff" stroke="#7a7a86" stroke-width=".7"/>
 <path d="M990.500 250.500v9M986 255h9" stroke="#3f78d0" stroke-width="2.400"/><path d="M990.500 251.500v7M987 255h7" stroke="#cfe3fb" stroke-width=".6"/>
 <path d="M1000.500 255h9" stroke="#3f78d0" stroke-width="2.800"/><path d="M1001.500 255h7" stroke="#cfe3fb" stroke-width=".6"/>
 <rect x="1015.500" y="251.500" width="7.500" height="7.500" fill="#eaf2fd" stroke="#2f5fb8" stroke-width=".9"/><path d="M1023 251.500v7.500h-7.500z" fill="#1f4fb0"/>
 <circle cx="1033.500" cy="254.500" r="4.300" fill="#2f5fb8"/><path d="M1031 252c1.500-1 3 0 3 1.500s2 1.500 2.500 3M1032 258c1-1 .5-2.500-1-3" stroke="#bcd6f6" stroke-width="1" fill="none"/>
 <!-- right icons -->
 <circle cx="1106" cy="227.500" r="6" fill="#e9e4f2" stroke="#e0708a" stroke-width="1.500"/><rect x="1102.500" y="224" width="7" height="7" fill="#5b79cc" stroke="#2f4fa0" stroke-width=".8"/><path d="M1103.500 225l5 5" stroke="#cfdaf5" stroke-width=".8"/>
 <rect x="1100" y="249.500" width="10.500" height="10.500" fill="#c9c9c9" stroke="#a5a5a5" stroke-width=".8"/><path d="M1104.500 253v9l2.200-2 1.600 3.300 1.400-.7-1.600-3.200h3z" fill="#5f5f5f"/>
 <path d="M1139 263.500h6l-3 3.800z" fill="#111"/>
</svg>

<!-- bottom -->
<svg style="left:0;top:636px" width="420" height="26" viewBox="0 636 420 26">
<path d="M3 640v18" stroke="#b8b8b8" stroke-width="1.500" stroke-dasharray="1 1.500"/>
<circle cx="14.3" cy="649" r="5.800" fill="#b9b9b9" stroke="#a2a2a2" stroke-width=".8"/><path d="M17 649h-5m0 0l2.200-2.200m-2.200 2.200l2.200 2.200" stroke="#f4f4f4" stroke-width="1.500" fill="none"/>
<circle cx="48.3" cy="649" r="5.800" fill="#b9b9b9" stroke="#a2a2a2" stroke-width=".8"/><path d="M45.600 649h5m0 0l-2.200-2.200m2.200 2.200l-2.200 2.200" stroke="#f4f4f4" stroke-width="1.500" fill="none"/>
<path d="M28.8 647.300h6.400l-3.200 3.600z" fill="#6a6a6a"/>
<path d="M63.099999999999994 647.300h6.400l-3.200 3.600z" fill="#6a6a6a"/>
<path d="M97.3 647.300h6.400l-3.200 3.600z" fill="#6a6a6a"/>
<path d="M82 643.500v7.500l7 2.500" stroke="#c0c0c0" stroke-width="1.100" fill="none"/>
<path d="M392.500 640v18" stroke="#b8b8b8" stroke-width="1.500" stroke-dasharray="1 1.500"/>
</svg>
<div class="a" style="left:109px;top:639px;width:134.500px;height:20px;background:#e1e1e1;border:1px solid #d2d2d2"></div>
<svg style="left:109px;top:639px" width="160" height="20" viewBox="109 639 160 20">
<rect x="111.500" y="645.500" width="5" height="5" fill="#eef2f8" stroke="#4a5f96" stroke-width=".9"/><rect x="115.500" y="646.500" width="6" height="4" fill="#dfe6f2" stroke="#4a5f96" stroke-width=".9"/>
<path d="M230 646.800h7.600l-3.800 4.200z" fill="#111"/>
<rect x="250.500" y="644.500" width="7.500" height="7" fill="#eef2f8" stroke="#5a6a8a" stroke-width=".9"/><rect x="255.500" y="646.500" width="8.500" height="6" fill="#f6f8fb" stroke="#5a6a8a" stroke-width=".9"/>
</svg>
<div class="vb" style="left:271.3px;background:linear-gradient(#ffe2a3,#fdbf5c);"></div>
<span class="t" style="left:274.9px;top:644px;font-size:10.900px;color:#1a1a1a">1</span>
<div class="vb" style="left:285.8px;"></div>
<span class="t" style="left:289.4px;top:644px;font-size:10.900px;color:#1a1a1a">2</span>
<div class="vb" style="left:299.9px;"></div>
<span class="t" style="left:303.5px;top:644px;font-size:10.900px;color:#1a1a1a">3</span>
<div class="vb" style="left:313.7px;"></div>
<span class="t" style="left:317.3px;top:644px;font-size:10.900px;color:#1a1a1a">4</span>
<div class="vb" style="left:327.6px;"></div>
<span class="t" style="left:331.2px;top:644px;font-size:10.900px;color:#1a1a1a">5</span>
<div class="vb" style="left:341.8px;"></div>
<span class="t" style="left:345.4px;top:644px;font-size:10.900px;color:#1a1a1a">6</span>
<div class="vb" style="left:356.1px;"></div>
<span class="t" style="left:359.7px;top:644px;font-size:10.900px;color:#1a1a1a">7</span>
<div class="vb" style="left:370.0px;"></div>
<span class="t" style="left:373.6px;top:644px;font-size:10.900px;color:#1a1a1a">8</span>
<div class="a" style="left:415px;top:642px;width:142px;height:15px;background:#fff;border:1px solid #b4b6bb"></div>
<div class="a" style="left:581px;top:642px;width:142px;height:15px;background:#fff;border:1px solid #b4b6bb"></div>
<div class="a" style="left:0;top:661px;width:1299px;height:1px;background:#dcdcdc"></div>
<div class="cell" style="left:0;width:412px;border-color:transparent #fff #fff transparent"></div>
<svg style="left:410px;top:662px" width="6" height="26" viewBox="0 0 6 26"><path d="M2.500 2v22" stroke="#b0b0b0" stroke-width="1.500" stroke-dasharray="1 1.500"/></svg>
<div class="cell" style="left:416.0px;width:393.5px"></div>
<div class="cell" style="left:811.5px;width:26.5px"></div>
<div class="cell" style="left:840.0px;width:27.0px"></div>
<div class="cell" style="left:869.0px;width:117.0px"></div>
<div class="cell" style="left:988.0px;width:104.0px"></div>
<div class="cell" style="left:1094.0px;width:28.6px"></div>
<div class="cell" style="left:1124.6px;width:26.4px"></div>
<div class="cell" style="left:1153.0px;width:28.0px"></div>
<div class="cell" style="left:1183.0px;width:26.0px"></div>
<div class="cell" style="left:1211.0px;width:28.0px"></div>
<div class="cell" style="left:1241.0px;width:27.6px"></div>
<div class="cell" style="left:1270.6px;width:26.4px"></div>
<svg style="left:812px;top:662px" width="60" height="26" viewBox="812 662 60 26"><path d="M820 681h8.500c2 0 2-2 2-4v-6" stroke="#3d64a3" stroke-width="1" fill="none" stroke-dasharray="3 1"/><circle cx="819.500" cy="681" r="1.700" fill="#fff" stroke="#3d64a3" stroke-width=".8"/><circle cx="827" cy="681" r="1.500" fill="#fff" stroke="#3d64a3" stroke-width=".8"/><circle cx="830.500" cy="670" r="1.700" fill="#fff" stroke="#3d64a3" stroke-width=".8"/>
<rect x="851" y="673" width="6.500" height="4.500" rx=".8" fill="#c9ae3a" stroke="#8a7420" stroke-width=".6"/><path d="M852.300 673v-1.400c0-2.200 3.900-2.200 3.900 0v1.400" stroke="#9a8a5a" stroke-width="1" fill="none"/></svg>
<svg style="left:1190px;top:668px" width="90" height="14" viewBox="1190 668 90 14"><path d="M1193.500 671h5.500l-1 3.500 1 3.500h-5.500l1-3.500z" fill="#f6f6f6" stroke="#b5b5b5" stroke-width=".9"/><rect x="1281" y="670.500" width="7" height="7.500" fill="#e8e8e8" stroke="#b0b0b0" stroke-width=".9"/><rect x="1283" y="672.500" width="3" height="3.500" fill="none" stroke="#909090" stroke-width=".8"/></svg>

<!-- taskbar -->
<div class="a" style="left:403px;top:688px;width:50px;height:41px;background:#535e66"></div>
<div class="a" style="left:153px;top:727px;width:42px;height:2px;background:#8db6df"></div>
<div class="a" style="left:255px;top:727px;width:42px;height:2px;background:#8db6df"></div>
<div class="a" style="left:306px;top:727px;width:42px;height:2px;background:#8db6df"></div>
<div class="a" style="left:357px;top:727px;width:42px;height:2px;background:#8db6df"></div>
<div class="a" style="left:403px;top:727px;width:50px;height:2px;background:#9cc3ea"></div>
<svg style="left:0;top:688px" width="460" height="41" viewBox="0 688 460 41">
 <!-- windows -->
 <path d="M15.500 702.300l7-1v7h-7zM23.500 701.100l9-1.300v8.500h-9zM15.500 709.300h7v7l-7-1zM23.500 709.300h9v8.500l-9-1.300z" fill="#fff"/>
 <!-- search -->
 <circle cx="76.500" cy="705.500" r="6.800" fill="none" stroke="#fff" stroke-width="2.200"/><path d="M71.500 710.500l-9 8.500" stroke="#fff" stroke-width="2.600"/>
 <!-- task view -->
 <rect x="114.500" y="702.500" width="10" height="12" fill="none" stroke="#e6e8eb" stroke-width="1.400"/><path d="M112.500 700.500v2.500M126.500 700.500v2.500M112.500 714v3M126.500 714v3M128.500 702v13" stroke="#c9cdd2" stroke-width="1.300"/>
 <!-- folder -->
 <path d="M163 702.500h8l2 2h12.500v13.500h-22.500z" fill="#f2c14a"/><path d="M163 706h22.500v12h-22.500z" fill="#fbd86a"/><rect x="168.500" y="710.500" width="11.500" height="7.500" fill="#4c9be0"/><rect x="171" y="713" width="6.500" height="2.500" fill="#cfe6fb"/>
 <!-- excel -->
 <rect x="221" y="700.500" width="14" height="17" fill="#fff"/><path d="M224 703.500h9M224 706.500h9M224 709.500h9M224 712.500h9M224 715.500h9M228.500 701v16" stroke="#1f7a45" stroke-width=".9"/><rect x="213.500" y="702.500" width="12" height="13" fill="#1d7044"/><path d="M216.500 705.500l6 7M222.500 705.500l-6 7" stroke="#fff" stroke-width="1.600"/>
 <!-- zalo -->
 <rect x="263.500" y="696.500" width="22" height="22" rx="6" fill="#f4f8ff"/><path d="M265 715l-1 5 5-2.500" fill="#f4f8ff"/><text x="265.500" y="710" font-family="Liberation Sans" font-weight="700" font-size="7.500" fill="#1a6fe8">Zalo</text>
 <circle cx="281.500" cy="715.500" r="6.800" fill="#e0202a"/><text x="276.800" y="719" font-family="Liberation Sans" font-weight="700" font-size="9" fill="#fff">5+</text>
 <!-- chrome -->
 <circle cx="325.500" cy="709" r="11.200" fill="#f0c42c"/>
 <path d="M325.500 709L315.800 703.400A11.200 11.200 0 0 1 335.200 703.400z" fill="#dd4b3e"/>
 <path d="M325.500 697.800a11.200 11.200 0 0 1 9.700 5.600h-9.700z" fill="#dd4b3e"/>
 <path d="M315.800 703.400A11.200 11.200 0 0 0 324.500 720.200L330 711.500 325.500 709z" fill="#2da24f"/>
 <path d="M335.200 703.400h-9.700l4.500 8.100-5.500 8.700a11.200 11.200 0 0 0 10.700-16.800z" fill="#f0c42c"/>
 <circle cx="325.500" cy="709" r="5.200" fill="#fff"/><circle cx="325.500" cy="709" r="4.100" fill="#3f83e8"/>
 <!-- word -->
 <rect x="372" y="700.500" width="14" height="17" fill="#fff"/><path d="M375 704h9M375 707h9M375 710h9M375 713h9" stroke="#2b5fb4" stroke-width=".9"/><rect x="364.500" y="702.500" width="12" height="13" fill="#2458b0"/><path d="M366.500 705.500l1.800 7 2.200-6 2.200 6 1.800-7" stroke="#fff" stroke-width="1.400" fill="none"/>
 <!-- gcadas -->
 <path d="M419 704l7-6 3 3-5 5v8l6 5-3 2.500-8-7z" fill="#e2504a"/><path d="M425 706l8-4 5 6-3 9-8 2-3-6z" fill="#3d7fb5" opacity=".85"/><path d="M426 708l6 7M433 703l-2 12" stroke="#1b4f7d" stroke-width=".9"/><circle cx="428.500" cy="697.500" r="1.800" fill="#e2504a"/>
</svg>
<svg style="left:840px;top:688px" width="459" height="41" viewBox="840 688 459 41">
 <!-- stock icon -->
 <path d="M849 713h3.500v7h-3.500zM854.500 710h3.500v10h-3.500zM860 715h3.500v5h-3.500zM865.500 717h3.500v3h-3.500z" fill="#e2532b"/>
 <path d="M848.500 697.500l8 6.500 3-2.500 8.500 8" stroke="#e2532b" stroke-width="2.400" fill="none"/><path d="M863 711.500h6.500v-6.500z" fill="#e2532b"/>
 <!-- chevron -->
 <path d="M1016 711l5.500-5.500 5.500 5.500" stroke="#fff" stroke-width="1.300" fill="none"/>
 <!-- speaker -->
 <path d="M1039.500 706.500h2.500l3.500-3.500v11l-3.500-3.500h-2.500z" fill="none" stroke="#fff" stroke-width="1.100"/><path d="M1047.500 706c1.200 1.500 1.200 4 0 5.500M1049.800 704c2.300 2.700 2.300 6.800 0 9.500M1052 702.300c3.200 3.700 3.200 9.200 0 12.900" stroke="#fff" stroke-width="1" fill="none"/>
 <!-- cloud -->
 <path d="M1065 713.500c-3.500 0-3.500-5 0-5 .3-3.500 5.500-4.300 6.800-1 1-1.500 4-1 4 1.500 3 0 3 4.500 0 4.500z" fill="#aeb4bb"/><path d="M1064 711.500c-2.500 0-2.500-4 .5-4 .5-3 5-3.500 6-.5" fill="#e9ecef"/>
 <circle cx="1075.500" cy="714.500" r="4.800" fill="#d8232e"/><path d="M1073.500 712.500l4 4M1077.500 712.500l-4 4" stroke="#fff" stroke-width="1.300"/>
 <!-- battery -->
 <rect x="1087.500" y="704.500" width="14" height="9" fill="none" stroke="#fff" stroke-width="1.100"/><rect x="1089.500" y="706.500" width="9.500" height="5" fill="#fff"/><path d="M1103 707.500v3" stroke="#fff" stroke-width="1.400"/>
 <!-- wifi -->
 <path d="M1114 716a12.500 12.500 0 0 1 12.500-12.500" stroke="#e9ebee" stroke-width="1.100" fill="none"/><path d="M1117.500 716a9 9 0 0 1 9-9" stroke="#b6bcc4" stroke-width="1.100" fill="none"/><path d="M1121 716a5.500 5.500 0 0 1 5.500-5.500" stroke="#b6bcc4" stroke-width="1.100" fill="none"/><circle cx="1125.500" cy="715.500" r="1.400" fill="#fff"/>
 <!-- notification -->
 <path d="M1258.500 701.500h16v11.500h-9l-4 4v-4h-3z" fill="#fff"/><path d="M1261.500 705h10M1261.500 707.500h10M1261.500 710h6" stroke="#27353e" stroke-width="1"/>
 <circle cx="1273.500" cy="716.500" r="6.300" fill="#27353e" stroke="#e5e7ea" stroke-width="1.100"/><text x="1270.700" y="720.300" font-family="Liberation Sans" font-size="10.500" fill="#fff">5</text>
</svg>

<!-- texts -->
<span class="t" style="left:20.8px;top:4.5px;font-size:12.4px;letter-spacing:-0.364px;color:#2b2b2b">DC1.dgn [2D - V8 DGN] - MicroStation V8i (SELECTseries 3)</span>
<span class="t" style="left:50.4px;top:28.3px;font-size:11.4px;letter-spacing:-0.091px;color:#000">Level 9</span>
<span class="t" style="left:211.0px;top:28.3px;font-size:11.4px;letter-spacing:-0.336px;color:#000">23</span>
<span class="t" style="left:275.3px;top:28.3px;font-size:11.4px;letter-spacing:0.000px;color:#000">0</span>
<span class="t" style="left:336.3px;top:28.3px;font-size:11.4px;letter-spacing:0.000px;color:#000">0</span>
<span class="t" style="left:15.2px;top:52.4px;font-size:11.4px;letter-spacing:-0.069px;color:#000"><u>F</u>ile</span>
<span class="t" style="left:46.6px;top:52.4px;font-size:11.4px;letter-spacing:-0.060px;color:#000"><u>E</u>dit</span>
<span class="t" style="left:79.8px;top:52.4px;font-size:11.4px;letter-spacing:-0.073px;color:#000">E<u>l</u>ement</span>
<span class="t" style="left:134.4px;top:52.4px;font-size:11.4px;letter-spacing:-0.021px;color:#000"><u>S</u>ettings</span>
<span class="t" style="left:189.9px;top:52.4px;font-size:11.4px;letter-spacing:0.118px;color:#000"><u>T</u>ools</span>
<span class="t" style="left:230.6px;top:52.4px;font-size:11.4px;letter-spacing:0.076px;color:#000"><u>U</u>tilities</span>
<span class="t" style="left:282.0px;top:52.4px;font-size:11.4px;letter-spacing:-0.022px;color:#000">Wor<u>k</u>space</span>
<span class="t" style="left:3.3px;top:73.5px;font-size:12.4px;letter-spacing:-0.614px;color:#262626">Tasks</span>
<span class="t" style="left:20.3px;top:94.4px;font-size:12.6px;letter-spacing:-0.341px;color:#262626">Tasks</span>
<span class="t" style="left:21.4px;top:143.7px;font-size:12.6px;letter-spacing:-0.237px;color:#262626">Bien Tap</span>
<span class="t" style="left:21.4px;top:161.9px;font-size:12.6px;letter-spacing:0.159px;color:#10283a;font-weight:700">Drawing</span>
<span class="t" style="left:21.0px;top:406.3px;font-size:12.6px;letter-spacing:-0.263px;color:#262626">Drawing Composition</span>
<span class="t" style="left:21.0px;top:424.7px;font-size:12.6px;letter-spacing:-0.100px;color:#262626">Terrain Model</span>
<span class="t" style="left:215.6px;top:82.4px;font-size:12.4px;letter-spacing:-0.248px;color:#000">View 1, Default</span>
<span class="t" style="left:126.8px;top:644.0px;font-size:11.4px;letter-spacing:-0.057px;color:#000">Default Views</span>
<span class="t" style="left:403.0px;top:643.8px;font-size:11.8px;letter-spacing:0.000px;color:#000;font-weight:700">X</span>
<span class="t" style="left:569.6px;top:643.8px;font-size:11.8px;letter-spacing:0.000px;color:#000;font-weight:700">Y</span>
<span class="t" style="left:419.0px;top:644.5px;font-size:11.4px;letter-spacing:-0.229px;color:#6d6d6d">587296.4318</span>
<span class="t" style="left:585.0px;top:644.5px;font-size:11.4px;letter-spacing:-0.238px;color:#6d6d6d">2275666.5543</span>
<span class="t" style="left:3.8px;top:670.2px;font-size:11.4px;letter-spacing:-0.021px;color:#000">Element Selection &gt; Identify element to add to set</span>
<span class="t" style="left:446.5px;top:670.2px;font-size:11.4px;letter-spacing:-0.060px;color:#000">Đang đọc dữ liệu từ tệp C:\Users\Admin\Downloads\dc01\DC1.dgn</span>
<span class="t" style="left:871.5px;top:670.2px;font-size:11.4px;letter-spacing:-0.033px;color:#000">Level 9</span>
<span class="t" style="left:880.5px;top:703.0px;font-size:15px;letter-spacing:-0.472px;color:#fff">VN index</span>
<span class="t" style="left:946.0px;top:703.0px;font-size:15px;letter-spacing:-0.589px;color:#e5645f">-0,84%</span>
<span class="t" style="left:1138.0px;top:704.2px;font-size:12.2px;letter-spacing:-1.474px;color:#fff">ENG</span>
<span class="t" style="left:1185.6px;top:694.6px;font-size:12.2px;letter-spacing:-0.474px;color:#fff">1:25 CH</span>
<span class="t" style="left:1176.0px;top:712.6px;font-size:12.2px;letter-spacing:0.100px;color:#fff">10/05/2024</span>
<span class="t" style="left:385.0px;top:32.5px;font-size:12.4px;letter-spacing:-0.324px;color:#222">gCadas - Xã Liên Sơn - Huyện Kim Bảng - Hà Nam</span>
<span class="t" style="left:363.8px;top:59.5px;font-size:12.6px;letter-spacing:-0.203px;color:#15284a">Hệ thống</span>
<span class="t" style="left:424.5px;top:59.5px;font-size:12.6px;letter-spacing:-0.445px;color:#15284a">Bản đồ</span>
<span class="t" style="left:472.5px;top:59.5px;font-size:12.6px;letter-spacing:-0.481px;color:#15284a">Hồ sơ</span>
<span class="t" style="left:515.0px;top:59.5px;font-size:12.6px;letter-spacing:-0.573px;color:#15284a">Cơ sở dữ liệu</span>
<span class="t" style="left:596.2px;top:59.5px;font-size:12.6px;letter-spacing:-0.589px;color:#15284a">Cơ sở dữ liệu TT75</span>
<span class="t" style="left:706.2px;top:59.5px;font-size:12.6px;letter-spacing:-0.332px;color:#15284a">Biến động</span>
<span class="t" style="left:771.2px;top:59.5px;font-size:12.6px;letter-spacing:-0.453px;color:#15284a">Công cụ</span>
<span class="t" style="left:826.2px;top:59.5px;font-size:12.6px;letter-spacing:-0.607px;color:#15284a">Kiểm kê</span>
<span class="t" style="left:878.3px;top:59.5px;font-size:12.6px;letter-spacing:-0.422px;color:#15284a">Thống kê cấp xã</span>
<span class="t" style="left:975.9px;top:59.5px;font-size:12.6px;letter-spacing:-0.487px;color:#15284a">Trợ giúp</span>
<span class="t" style="left:1030.3px;top:58.1px;font-size:12.6px;letter-spacing:-0.516px;color:#15284a">Plugins</span>
<span class="t" style="left:621.2px;top:82.0px;font-size:12.6px;letter-spacing:-0.200px;color:#15284a">Tạo đối tượng không gian toàn xã</span>
<span class="t" style="left:621.2px;top:103.2px;font-size:12.6px;letter-spacing:-0.206px;color:#15284a">Khởi tạo lớp đối tượng</span>
<span class="t" style="left:621.2px;top:125.3px;font-size:12.6px;letter-spacing:-0.109px;color:#15284a">Cập nhật thông tin thuộc tính đối tượng</span>
<span class="t" style="left:621.2px;top:146.7px;font-size:12.6px;letter-spacing:-0.234px;color:#15284a">Hiển thị dữ liệu</span>
<span class="t" style="left:621.2px;top:167.8px;font-size:12.6px;letter-spacing:-0.284px;color:#15284a">Xuất ShapeFile theo cấu trúc thông tư 75</span>
<span class="t" style="left:621.2px;top:192.3px;font-size:12.6px;letter-spacing:-0.389px;color:#15284a">Siêu dữ liệu địa chính</span>
<span class="t" style="left:621.2px;top:215.7px;font-size:12.6px;letter-spacing:-0.293px;color:#15284a">Xuất GML bản đồ nền</span>
<span class="t" style="left:976.6px;top:194.1px;font-size:12.4px;letter-spacing:-0.683px;color:#9b9b9b">Elemen...</span>
</body></html>
